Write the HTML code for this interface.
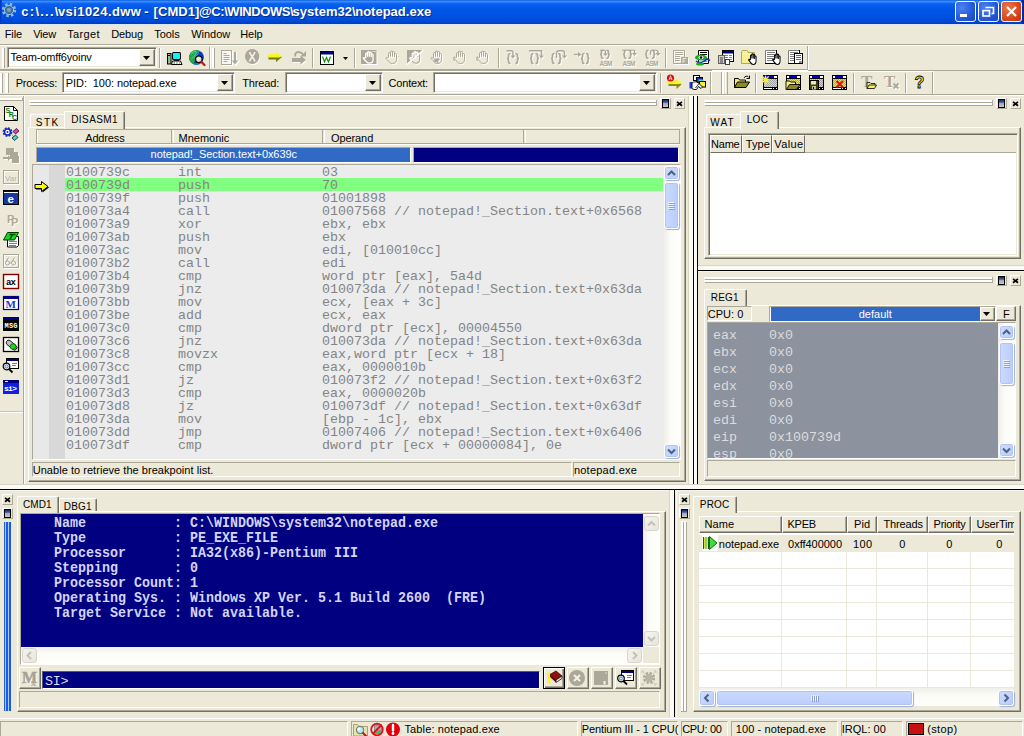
<!DOCTYPE html>
<html><head><meta charset="utf-8"><title>SoftICE</title>
<style>
html,body{margin:0;padding:0}
body{width:1024px;height:736px;position:relative;overflow:hidden;background:#ECE9D8;font:11px "Liberation Sans",sans-serif;color:#000}
div{position:absolute;white-space:pre}
svg{position:absolute;overflow:visible}
.t{font:11px/13px "Liberation Sans",sans-serif;color:#000}
.m{font:13.33px/13px "Liberation Mono",monospace;color:#848484}
.c{font:bold 13.33px/15px "Liberation Mono",monospace;color:#D4D4F8;transform:scaleY(1.1);transform-origin:0 0}
.tab{font:10px/12px "Liberation Sans",sans-serif;letter-spacing:0.45px;color:#000}
.title{font:bold 13px/16px "Liberation Sans",sans-serif;color:#fff;text-shadow:1px 1px 0 #0A2A80;letter-spacing:0.17px}
.bigm{font:bold 16px/18px "Liberation Serif",serif;color:#A6A293;text-shadow:1px 1px 0 #fff;-webkit-text-stroke:0.5px #A6A293}
.smx{font:bold 10px/10px "Liberation Serif",serif;color:#ACA899}
.si{font:13.33px/13px "Liberation Mono",monospace;color:#DCDCF4;letter-spacing:-0.3px}

</style></head>
<body>
<div style="left:0px;top:0px;width:1024px;height:24px;background:linear-gradient(to bottom,#0A5FE0 0%,#3C8CF8 6%,#0A60F0 16%,#0055E5 40%,#0050E0 75%,#0046D0 92%,#003CC0 100%)"></div>
<div style="left:1021px;top:0px;width:3px;height:24px;background:linear-gradient(to right,#0040C8,#001E8C)"></div>
<div class="title" style="left:21.3px;top:4px;letter-spacing:1.26px;">c:\...\</div>
<div class="title" style="left:57.9px;top:4px;letter-spacing:0.43px;">vsi1024.dww</div>
<div class="title" style="left:144.2px;top:4px;letter-spacing:2.34px;">-</div>
<div class="title" style="left:153.5px;top:4px;letter-spacing:0.08px;">[CMD1]</div>
<div class="title" style="left:199.0px;top:4px;letter-spacing:-0.42px;">@C:\WINDOWS\</div>
<div class="title" style="left:292.5px;top:4px;letter-spacing:0.04px;">system32\</div>
<div class="title" style="left:355.2px;top:4px;letter-spacing:0.01px;">notepad.exe</div>
<div style="left:955px;top:1px;width:21px;height:21px;box-sizing:border-box;border:1px solid #fff;border-radius:3px;background:radial-gradient(circle at 30% 30%,#4C82F0,#2458D8 60%,#1C44B8)"></div>
<div style="left:978px;top:1px;width:21px;height:21px;box-sizing:border-box;border:1px solid #fff;border-radius:3px;background:radial-gradient(circle at 30% 30%,#4C82F0,#2458D8 60%,#1C44B8)"></div>
<div style="left:1001px;top:1px;width:21px;height:21px;box-sizing:border-box;border:1px solid #fff;border-radius:3px;background:radial-gradient(circle at 30% 30%,#E8764C,#D8481E 60%,#B8320C)"></div>
<svg style="left:955px;top:1px" width="67" height="21"><rect x="5" y="13" width="7" height="3" fill="#fff"/><path d="M30.5 6.5h8v6h-2" fill="none" stroke="#fff" stroke-width="1.6"/><rect x="28" y="9.6" width="6.5" height="5.4" fill="none" stroke="#fff" stroke-width="1.6"/><path d="M52 6l9 9M61 6l-9 9" stroke="#fff" stroke-width="2.2" fill="none"/></svg>
<svg style="left:1px;top:2px" width="16" height="16" viewBox="0 0 16 16"><circle cx="8" cy="8" r="5.600" fill="none" stroke="#8FB8DC" stroke-width="3.200" stroke-dasharray="2.300 2.100"/><circle cx="8" cy="8" r="4.600" fill="#2F6FA8" stroke="#9CC4E4" stroke-width="1"/><circle cx="8" cy="8" r="2.300" fill="#7C98B0"/><circle cx="7.600" cy="7.600" r="1" fill="#A89888"/></svg>
<div style="left:0px;top:24px;width:1024px;height:1px;background:#DDE6F6"></div>
<div style="left:0px;top:0px;width:1px;height:24px;background:#0038C8"></div>
<div style="left:1px;top:0px;width:1px;height:24px;background:#0048D8"></div>
<div class="t" style="left:4.7px;top:28px;letter-spacing:-0.08px;">File</div>
<div class="t" style="left:33.2px;top:28px;letter-spacing:-0.22px;">View</div>
<div class="t" style="left:67.2px;top:28px;letter-spacing:0.38px;">Target</div>
<div class="t" style="left:111.2px;top:28px;letter-spacing:-0.11px;">Debug</div>
<div class="t" style="left:154.2px;top:28px;letter-spacing:-0.05px;">Tools</div>
<div class="t" style="left:191.2px;top:28px;letter-spacing:-0.03px;">Window</div>
<div class="t" style="left:240.2px;top:28px;letter-spacing:-0.04px;">Help</div>
<div style="left:0px;top:44px;width:1024px;height:1px;background:#ACA899"></div>
<div style="left:0px;top:45px;width:1024px;height:1px;background:#FFFFFF"></div>
<div style="left:2px;top:48px;width:1px;height:20px;background:#FFFFFF"></div>
<div style="left:3px;top:48px;width:1px;height:20px;background:#FFFFFF"></div>
<div style="left:4px;top:48px;width:1px;height:20px;background:#ACA899"></div>
<div style="left:7px;top:47px;width:150px;height:21px;box-sizing:border-box;border:1px solid;border-color:#ACA899 #FFFFFF #FFFFFF #ACA899;background:#FFFFFF;box-shadow:inset 1px 1px 0 #716F64, inset -1px -1px 0 #ECE9D8;"></div>
<div class="t" style="left:10.4px;top:51px;letter-spacing:-0.15px;">Team-omff6yoinv</div>
<div style="left:139px;top:49px;width:16px;height:17px;box-sizing:border-box;background:#ECE9D8;border:1px solid;border-color:#FFFFFF #716F64 #716F64 #FFFFFF;box-shadow:inset -1px -1px 0 #ACA899"></div>
<svg style="left:143px;top:56px" width="7" height="4"><path d="M0 0h7l-3.5 4z" fill="#000"/></svg>
<div style="left:0px;top:69px;width:808px;height:1px;background:#ACA899"></div>
<div style="left:0px;top:70px;width:808px;height:1px;background:#FFFFFF"></div>
<div style="left:0px;top:71px;width:934px;height:1px;background:#FFFFFF"></div>
<div style="left:808px;top:70px;width:216px;height:1px;background:#ACA899"></div>
<div style="left:0px;top:70px;width:712px;height:1px;background:#ACA899"></div>
<div style="left:807px;top:46px;width:1px;height:23px;background:#ACA899"></div>
<div style="left:808px;top:46px;width:1px;height:24px;background:#FFFFFF"></div>
<div style="left:0px;top:73px;width:1px;height:20px;background:#FFFFFF"></div>
<div style="left:1px;top:73px;width:1px;height:20px;background:#FFFFFF"></div>
<div style="left:2px;top:73px;width:1px;height:20px;background:#ACA899"></div>
<div style="left:5px;top:73px;width:1px;height:20px;background:#FFFFFF"></div>
<div style="left:6px;top:73px;width:1px;height:20px;background:#FFFFFF"></div>
<div style="left:7px;top:73px;width:1px;height:20px;background:#FFFFFF"></div>
<div style="left:8px;top:73px;width:1px;height:20px;background:#ACA899"></div>
<div class="t" style="left:15.7px;top:77px;letter-spacing:-0.16px;">Process:</div>
<div style="left:62px;top:72px;width:173px;height:21px;box-sizing:border-box;border:1px solid;border-color:#ACA899 #FFFFFF #FFFFFF #ACA899;background:#FFFFFF;box-shadow:inset 1px 1px 0 #716F64, inset -1px -1px 0 #ECE9D8;"></div>
<div class="t" style="left:65.8px;top:77px;letter-spacing:-0.08px;">PID:  100: notepad.exe</div>
<div style="left:217px;top:74px;width:16px;height:17px;box-sizing:border-box;background:#ECE9D8;border:1px solid;border-color:#FFFFFF #716F64 #716F64 #FFFFFF;box-shadow:inset -1px -1px 0 #ACA899"></div>
<svg style="left:221px;top:81px" width="7" height="4"><path d="M0 0h7l-3.5 4z" fill="#000"/></svg>
<div class="t" style="left:242.2px;top:77px;letter-spacing:-0.15px;">Thread:</div>
<div style="left:285px;top:72px;width:98px;height:21px;box-sizing:border-box;border:1px solid;border-color:#ACA899 #FFFFFF #FFFFFF #ACA899;background:#FFFFFF;box-shadow:inset 1px 1px 0 #716F64, inset -1px -1px 0 #ECE9D8;"></div>
<div style="left:365px;top:74px;width:16px;height:17px;box-sizing:border-box;background:#ECE9D8;border:1px solid;border-color:#FFFFFF #716F64 #716F64 #FFFFFF;box-shadow:inset -1px -1px 0 #ACA899"></div>
<svg style="left:369px;top:81px" width="7" height="4"><path d="M0 0h7l-3.5 4z" fill="#000"/></svg>
<div class="t" style="left:388.6px;top:77px;letter-spacing:-0.21px;">Context:</div>
<div style="left:433px;top:72px;width:224px;height:21px;box-sizing:border-box;border:1px solid;border-color:#ACA899 #FFFFFF #FFFFFF #ACA899;background:#FFFFFF;box-shadow:inset 1px 1px 0 #716F64, inset -1px -1px 0 #ECE9D8;"></div>
<div style="left:639px;top:74px;width:16px;height:17px;box-sizing:border-box;background:#ECE9D8;border:1px solid;border-color:#FFFFFF #716F64 #716F64 #FFFFFF;box-shadow:inset -1px -1px 0 #ACA899"></div>
<svg style="left:643px;top:81px" width="7" height="4"><path d="M0 0h7l-3.5 4z" fill="#000"/></svg>
<div style="left:0px;top:94px;width:1024px;height:1px;background:#ACA899"></div>
<div style="left:0px;top:95px;width:1024px;height:1px;background:#FFFFFF"></div>
<div style="left:23px;top:96px;width:1px;height:388px;background:#ACA899"></div>
<div style="left:24px;top:96px;width:1px;height:388px;background:#FFFFFF"></div>
<div style="left:0px;top:411px;width:23px;height:1px;background:#C9C6B6"></div>
<div style="left:0px;top:412px;width:23px;height:1px;background:#FFFFFF"></div>
<div style="left:0px;top:98px;width:22px;height:1px;background:#FFFFFF"></div>
<div style="left:0px;top:99px;width:22px;height:1px;background:#FFFFFF"></div>
<div style="left:0px;top:100px;width:22px;height:1px;background:#ACA899"></div>
<div style="left:22px;top:98px;width:1px;height:3px;background:#ACA899"></div>
<div style="left:29px;top:100px;width:627px;height:1px;background:#FFFFFF"></div>
<div style="left:29px;top:101px;width:627px;height:1px;background:#FFFFFF"></div>
<div style="left:30px;top:102px;width:627px;height:1px;background:#ACA899"></div>
<div style="left:656px;top:100px;width:1px;height:3px;background:#ACA899"></div>
<div style="left:29px;top:103px;width:627px;height:1px;background:#FFFFFF"></div>
<div style="left:29px;top:104px;width:627px;height:1px;background:#FFFFFF"></div>
<div style="left:30px;top:105px;width:627px;height:1px;background:#ACA899"></div>
<div style="left:656px;top:103px;width:1px;height:3px;background:#ACA899"></div>
<div style="left:660px;top:98px;width:11px;height:11px;box-sizing:border-box;border:1px solid;border-color:#FFFFFF #ACA899 #ACA899 #FFFFFF;"></div>
<div style="left:662px;top:99px;width:7px;height:9px;box-sizing:border-box;border:1px solid #000;background:linear-gradient(to bottom,#0A246A 0,#4A66B0 35%,#A6A6A6 45%,#C8C8C8 100%)"></div>
<div style="left:674px;top:98px;width:11px;height:11px;box-sizing:border-box;border:1px solid;border-color:#FFFFFF #ACA899 #ACA899 #FFFFFF;"></div>
<svg style="left:676px;top:101px" width="7" height="6"><path d="M1 0.9l5 3.8M6 0.9l-5 3.8" stroke="#000" stroke-width="1.7" fill="none"/></svg>
<div style="left:28px;top:127px;width:658px;height:355px;box-sizing:border-box;border:1px solid;border-color:#FFFFFF #716F64 #716F64 #FFFFFF;box-shadow:inset -1px -1px 0 #ACA899"></div>
<div style="left:30px;top:114px;width:34px;height:13px;box-sizing:border-box;border:1px solid;border-color:#FFFFFF #ECE9D8 #ECE9D8 #FFFFFF;border-bottom:none;border-right:none;border-radius:2px 0 0 0;background:#ECE9D8"></div>
<div class="tab" style="left:35.8px;top:117px;letter-spacing:1.47px;">STK</div>
<div style="left:64px;top:111px;width:61px;height:18px;box-sizing:border-box;border:1px solid;border-color:#FFFFFF #716F64 #ECE9D8 #FFFFFF;border-bottom:none;border-radius:2px 2px 0 0;background:#ECE9D8;box-shadow:inset -1px 0 0 #ACA899"></div>
<div class="tab" style="left:71.2px;top:114px;letter-spacing:0.43px;">DISASM1</div>
<div style="left:36px;top:129px;width:644px;height:1px;background:#ACA899"></div>
<div style="left:36px;top:143px;width:644px;height:1px;background:#ACA899"></div>
<div style="left:36px;top:144px;width:644px;height:1px;background:#FFFFFF"></div>
<div style="left:36px;top:129px;width:1px;height:15px;background:#ACA899"></div>
<div style="left:37px;top:130px;width:1px;height:13px;background:#FFFFFF"></div>
<div style="left:171px;top:130px;width:1px;height:13px;background:#ACA899"></div>
<div class="t" style="left:85.2px;top:132px;letter-spacing:-0.14px;">Address</div>
<div style="left:173px;top:130px;width:1px;height:13px;background:#FFFFFF"></div>
<div style="left:322px;top:130px;width:1px;height:13px;background:#ACA899"></div>
<div class="t" style="left:178.6px;top:132px;letter-spacing:-0.01px;">Mnemonic</div>
<div style="left:324px;top:130px;width:1px;height:13px;background:#FFFFFF"></div>
<div style="left:523px;top:130px;width:1px;height:13px;background:#ACA899"></div>
<div class="t" style="left:330.9px;top:132px;letter-spacing:-0.07px;">Operand</div>
<div style="left:525px;top:130px;width:1px;height:13px;background:#FFFFFF"></div>
<div style="left:679px;top:130px;width:1px;height:13px;background:#ACA899"></div>
<div style="left:36px;top:147px;width:375px;height:16px;box-sizing:border-box;border:1px solid;border-color:#ACA899 #FFFFFF #FFFFFF #ACA899;background:#316AC5"></div>
<div class="t" style="left:150.6px;top:148px;color:#fff;letter-spacing:-0.07px;">notepad!_Section.text+0x639c</div>
<div style="left:413px;top:147px;width:266px;height:16px;box-sizing:border-box;border:1px solid;border-color:#ACA899 #FFFFFF #FFFFFF #ACA899;background:#000080"></div>
<div style="left:32px;top:164px;width:649px;height:296px;box-sizing:border-box;border:1px solid;border-color:#ACA899 #FFFFFF #FFFFFF #ACA899;background:#ECECEC"></div>
<div style="left:33px;top:165px;width:16px;height:294px;background:#E8E8E8"></div>
<div style="left:49px;top:165px;width:16px;height:294px;background:#D8D8D8"></div>
<div style="left:65px;top:178px;width:598px;height:13px;background:#80FF80"></div>
<div class="m" style="left:66px;top:166px;">0100739c</div>
<div class="m" style="left:178px;top:166px;">int</div>
<div class="m" style="left:322px;top:166px;">03</div>
<div class="m" style="left:66px;top:179px;">0100739d</div>
<div class="m" style="left:178px;top:179px;">push</div>
<div class="m" style="left:322px;top:179px;">70</div>
<div class="m" style="left:66px;top:192px;">0100739f</div>
<div class="m" style="left:178px;top:192px;">push</div>
<div class="m" style="left:322px;top:192px;">01001898</div>
<div class="m" style="left:66px;top:205px;">010073a4</div>
<div class="m" style="left:178px;top:205px;">call</div>
<div class="m" style="left:322px;top:205px;">01007568 // notepad!_Section.text+0x6568</div>
<div class="m" style="left:66px;top:218px;">010073a9</div>
<div class="m" style="left:178px;top:218px;">xor</div>
<div class="m" style="left:322px;top:218px;">ebx, ebx</div>
<div class="m" style="left:66px;top:231px;">010073ab</div>
<div class="m" style="left:178px;top:231px;">push</div>
<div class="m" style="left:322px;top:231px;">ebx</div>
<div class="m" style="left:66px;top:244px;">010073ac</div>
<div class="m" style="left:178px;top:244px;">mov</div>
<div class="m" style="left:322px;top:244px;">edi, [010010cc]</div>
<div class="m" style="left:66px;top:257px;">010073b2</div>
<div class="m" style="left:178px;top:257px;">call</div>
<div class="m" style="left:322px;top:257px;">edi</div>
<div class="m" style="left:66px;top:270px;">010073b4</div>
<div class="m" style="left:178px;top:270px;">cmp</div>
<div class="m" style="left:322px;top:270px;">word ptr [eax], 5a4d</div>
<div class="m" style="left:66px;top:283px;">010073b9</div>
<div class="m" style="left:178px;top:283px;">jnz</div>
<div class="m" style="left:322px;top:283px;">010073da // notepad!_Section.text+0x63da</div>
<div class="m" style="left:66px;top:296px;">010073bb</div>
<div class="m" style="left:178px;top:296px;">mov</div>
<div class="m" style="left:322px;top:296px;">ecx, [eax + 3c]</div>
<div class="m" style="left:66px;top:309px;">010073be</div>
<div class="m" style="left:178px;top:309px;">add</div>
<div class="m" style="left:322px;top:309px;">ecx, eax</div>
<div class="m" style="left:66px;top:322px;">010073c0</div>
<div class="m" style="left:178px;top:322px;">cmp</div>
<div class="m" style="left:322px;top:322px;">dword ptr [ecx], 00004550</div>
<div class="m" style="left:66px;top:335px;">010073c6</div>
<div class="m" style="left:178px;top:335px;">jnz</div>
<div class="m" style="left:322px;top:335px;">010073da // notepad!_Section.text+0x63da</div>
<div class="m" style="left:66px;top:348px;">010073c8</div>
<div class="m" style="left:178px;top:348px;">movzx</div>
<div class="m" style="left:322px;top:348px;">eax,word ptr [ecx + 18]</div>
<div class="m" style="left:66px;top:361px;">010073cc</div>
<div class="m" style="left:178px;top:361px;">cmp</div>
<div class="m" style="left:322px;top:361px;">eax, 0000010b</div>
<div class="m" style="left:66px;top:374px;">010073d1</div>
<div class="m" style="left:178px;top:374px;">jz</div>
<div class="m" style="left:322px;top:374px;">010073f2 // notepad!_Section.text+0x63f2</div>
<div class="m" style="left:66px;top:387px;">010073d3</div>
<div class="m" style="left:178px;top:387px;">cmp</div>
<div class="m" style="left:322px;top:387px;">eax, 0000020b</div>
<div class="m" style="left:66px;top:400px;">010073d8</div>
<div class="m" style="left:178px;top:400px;">jz</div>
<div class="m" style="left:322px;top:400px;">010073df // notepad!_Section.text+0x63df</div>
<div class="m" style="left:66px;top:413px;">010073da</div>
<div class="m" style="left:178px;top:413px;">mov</div>
<div class="m" style="left:322px;top:413px;">[ebp - 1c], ebx</div>
<div class="m" style="left:66px;top:426px;">010073dd</div>
<div class="m" style="left:178px;top:426px;">jmp</div>
<div class="m" style="left:322px;top:426px;">01007406 // notepad!_Section.text+0x6406</div>
<div class="m" style="left:66px;top:439px;">010073df</div>
<div class="m" style="left:178px;top:439px;">cmp</div>
<div class="m" style="left:322px;top:439px;">dword ptr [ecx + 00000084], 0e</div>
<svg style="left:34px;top:180px" width="16" height="14" viewBox="0 0 16 14"><path d="M2 5.500h6.500v-3l6.500 5l-6.500 5v-3h-6.500z" fill="#000"/><path d="M1 4.500h6.500v-3l6.500 5l-6.500 5v-3h-6.500z" fill="#FFFF00" stroke="#000" stroke-width="1"/></svg>
<div style="left:32px;top:462px;width:540px;height:15px;box-sizing:border-box;border:1px solid;border-color:#ACA899 #FFFFFF #FFFFFF #ACA899;"></div>
<div class="t" style="left:32.7px;top:464px;letter-spacing:0.04px;">Unable to retrieve the breakpoint list.</div>
<div style="left:573px;top:462px;width:107px;height:15px;box-sizing:border-box;border:1px solid;border-color:#ACA899 #FFFFFF #FFFFFF #ACA899;"></div>
<div class="t" style="left:573.9px;top:464px;letter-spacing:0.24px;">notepad.exe</div>
<div style="left:688px;top:96px;width:1px;height:388px;background:#D8D5C4"></div>
<div style="left:689px;top:96px;width:4px;height:389px;background:#FBFAF5"></div>
<div style="left:693px;top:96px;width:1px;height:389px;background:#000"></div>
<div style="left:694px;top:96px;width:3px;height:389px;background:#FBFAF5"></div>
<div style="left:697px;top:96px;width:1px;height:389px;background:#000"></div>
<div style="left:698px;top:265px;width:326px;height:1px;background:#D8D5C4"></div>
<div style="left:698px;top:266px;width:326px;height:4px;background:#FBFAF5"></div>
<div style="left:697px;top:270px;width:327px;height:1px;background:#000"></div>
<div style="left:698px;top:271px;width:326px;height:1px;background:#F6F5EE"></div>
<div style="left:0px;top:484px;width:1024px;height:1px;background:#D8D5C4"></div>
<div style="left:0px;top:485px;width:1024px;height:4px;background:#FBFAF5"></div>
<div style="left:0px;top:489px;width:1024px;height:1px;background:#000"></div>
<div style="left:0px;top:490px;width:1024px;height:1px;background:#F6F5EE"></div>
<div style="left:669px;top:490px;width:1px;height:227px;background:#D8D5C4"></div>
<div style="left:670px;top:490px;width:4px;height:227px;background:#FBFAF5"></div>
<div style="left:674px;top:490px;width:1px;height:227px;background:#000"></div>
<div style="left:676px;top:491px;width:1px;height:226px;background:#F8F7F2"></div>
<div style="left:704px;top:100px;width:288px;height:1px;background:#FFFFFF"></div>
<div style="left:704px;top:101px;width:288px;height:1px;background:#FFFFFF"></div>
<div style="left:705px;top:102px;width:288px;height:1px;background:#ACA899"></div>
<div style="left:992px;top:100px;width:1px;height:3px;background:#ACA899"></div>
<div style="left:704px;top:103px;width:288px;height:1px;background:#FFFFFF"></div>
<div style="left:704px;top:104px;width:288px;height:1px;background:#FFFFFF"></div>
<div style="left:705px;top:105px;width:288px;height:1px;background:#ACA899"></div>
<div style="left:992px;top:103px;width:1px;height:3px;background:#ACA899"></div>
<div style="left:996px;top:98px;width:11px;height:11px;box-sizing:border-box;border:1px solid;border-color:#FFFFFF #ACA899 #ACA899 #FFFFFF;"></div>
<div style="left:998px;top:99px;width:7px;height:9px;box-sizing:border-box;border:1px solid #000;background:linear-gradient(to bottom,#0A246A 0,#4A66B0 35%,#A6A6A6 45%,#C8C8C8 100%)"></div>
<div style="left:1010px;top:98px;width:11px;height:11px;box-sizing:border-box;border:1px solid;border-color:#FFFFFF #ACA899 #ACA899 #FFFFFF;"></div>
<svg style="left:1012px;top:101px" width="7" height="6"><path d="M1 0.9l5 3.8M6 0.9l-5 3.8" stroke="#000" stroke-width="1.7" fill="none"/></svg>
<div style="left:704px;top:127px;width:317px;height:132px;box-sizing:border-box;border:1px solid;border-color:#FFFFFF #716F64 #716F64 #FFFFFF;box-shadow:inset -1px -1px 0 #ACA899"></div>
<div style="left:706px;top:114px;width:34px;height:13px;box-sizing:border-box;border:1px solid;border-color:#FFFFFF #ECE9D8 #ECE9D8 #FFFFFF;border-bottom:none;border-right:none;border-radius:2px 0 0 0;background:#ECE9D8"></div>
<div class="tab" style="left:710.2px;top:117px;letter-spacing:1.19px;">WAT</div>
<div style="left:740px;top:111px;width:39px;height:18px;box-sizing:border-box;border:1px solid;border-color:#FFFFFF #716F64 #ECE9D8 #FFFFFF;border-bottom:none;border-radius:2px 2px 0 0;background:#ECE9D8;box-shadow:inset -1px 0 0 #ACA899"></div>
<div class="tab" style="left:746.8px;top:114px;letter-spacing:0.26px;">LOC</div>
<div style="left:708px;top:133px;width:310px;height:123px;box-sizing:border-box;border:1px solid;border-color:#ACA899 #FFFFFF #FFFFFF #ACA899;background:#FFFFFF;box-shadow:inset 1px 1px 0 #716F64, inset -1px -1px 0 #ECE9D8;"></div>
<div style="left:710px;top:135px;width:306px;height:18px;background:#ECE9D8"></div>
<div style="left:710px;top:152px;width:306px;height:1px;background:#ACA899"></div>
<div style="left:710px;top:135px;width:32px;height:18px;box-sizing:border-box;border:1px solid;border-color:#FFFFFF #ACA899 #ACA899 #FFFFFF;border-color:#FFFFFF #716F64 #716F64 #FFFFFF"></div>
<div class="t" style="left:711.1px;top:138px;letter-spacing:-0.25px;">Name</div>
<div style="left:742px;top:135px;width:30px;height:18px;box-sizing:border-box;border:1px solid;border-color:#FFFFFF #ACA899 #ACA899 #FFFFFF;border-color:#FFFFFF #716F64 #716F64 #FFFFFF"></div>
<div class="t" style="left:745.8px;top:138px;letter-spacing:0.08px;">Type</div>
<div style="left:772px;top:135px;width:33px;height:18px;box-sizing:border-box;border:1px solid;border-color:#FFFFFF #ACA899 #ACA899 #FFFFFF;border-color:#FFFFFF #716F64 #716F64 #FFFFFF"></div>
<div class="t" style="left:774.2px;top:138px;letter-spacing:0.42px;">Value</div>
<div style="left:704px;top:277px;width:288px;height:1px;background:#FFFFFF"></div>
<div style="left:704px;top:278px;width:288px;height:1px;background:#FFFFFF"></div>
<div style="left:705px;top:279px;width:288px;height:1px;background:#ACA899"></div>
<div style="left:992px;top:277px;width:1px;height:3px;background:#ACA899"></div>
<div style="left:704px;top:280px;width:288px;height:1px;background:#FFFFFF"></div>
<div style="left:704px;top:281px;width:288px;height:1px;background:#FFFFFF"></div>
<div style="left:705px;top:282px;width:288px;height:1px;background:#ACA899"></div>
<div style="left:992px;top:280px;width:1px;height:3px;background:#ACA899"></div>
<div style="left:996px;top:275px;width:11px;height:11px;box-sizing:border-box;border:1px solid;border-color:#FFFFFF #ACA899 #ACA899 #FFFFFF;"></div>
<div style="left:998px;top:276px;width:7px;height:9px;box-sizing:border-box;border:1px solid #000;background:linear-gradient(to bottom,#0A246A 0,#4A66B0 35%,#A6A6A6 45%,#C8C8C8 100%)"></div>
<div style="left:1010px;top:275px;width:11px;height:11px;box-sizing:border-box;border:1px solid;border-color:#FFFFFF #ACA899 #ACA899 #FFFFFF;"></div>
<svg style="left:1012px;top:278px" width="7" height="6"><path d="M1 0.9l5 3.8M6 0.9l-5 3.8" stroke="#000" stroke-width="1.7" fill="none"/></svg>
<div style="left:704px;top:305px;width:317px;height:176px;box-sizing:border-box;border:1px solid;border-color:#FFFFFF #716F64 #716F64 #FFFFFF;box-shadow:inset -1px -1px 0 #ACA899"></div>
<div style="left:704px;top:289px;width:43px;height:18px;box-sizing:border-box;border:1px solid;border-color:#FFFFFF #716F64 #ECE9D8 #FFFFFF;border-bottom:none;border-radius:2px 2px 0 0;background:#ECE9D8;box-shadow:inset -1px 0 0 #ACA899"></div>
<div class="tab" style="left:710.7px;top:292px;letter-spacing:0.25px;">REG1</div>
<div style="left:707px;top:306px;width:45px;height:15px;box-sizing:border-box;border:1px solid;border-color:#ACA899 #FFFFFF #FFFFFF #ACA899;"></div>
<div class="t" style="left:707.8px;top:308px;letter-spacing:0.01px;">CPU: 0</div>
<div style="left:769px;top:306px;width:227px;height:16px;box-sizing:border-box;border:1px solid;border-color:#ACA899 #FFFFFF #FFFFFF #ACA899;background:#fff"></div>
<div style="left:771px;top:307px;width:209px;height:14px;background:#316AC5"></div>
<div class="t" style="left:858.7px;top:308px;color:#fff;letter-spacing:0.03px;">default</div>
<div style="left:980px;top:307px;width:15px;height:14px;box-sizing:border-box;background:#ECE9D8;border:1px solid;border-color:#FFFFFF #716F64 #716F64 #FFFFFF;box-shadow:inset -1px -1px 0 #ACA899"></div>
<svg style="left:983px;top:312px" width="7" height="4"><path d="M0 0h7l-3.5 4z" fill="#000"/></svg>
<div style="left:996px;top:306px;width:20px;height:15px;box-sizing:border-box;background:#ECE9D8;border:1px solid;border-color:#FFFFFF #716F64 #716F64 #FFFFFF;box-shadow:inset -1px -1px 0 #ACA899"></div>
<div class="t" style="left:1003px;top:308px;">F</div>
<div style="left:707px;top:322px;width:309px;height:137px;box-sizing:border-box;border:1px solid;border-color:#ACA899 #FFFFFF #FFFFFF #ACA899;background:#fff"></div>
<div style="left:708px;top:323px;width:290px;height:135px;background:#8C929E"></div>
<div style="left:708px;top:323px;width:290px;height:135px;overflow:hidden"><div style="left:0;top:0"><div class="m" style="left:5px;top:6px;color:#DCDCDC">eax</div><div class="m" style="left:61px;top:6px;color:#DCDCDC">0x0</div><div class="m" style="left:5px;top:23px;color:#DCDCDC">ebx</div><div class="m" style="left:61px;top:23px;color:#DCDCDC">0x0</div><div class="m" style="left:5px;top:40px;color:#DCDCDC">ecx</div><div class="m" style="left:61px;top:40px;color:#DCDCDC">0x0</div><div class="m" style="left:5px;top:57px;color:#DCDCDC">edx</div><div class="m" style="left:61px;top:57px;color:#DCDCDC">0x0</div><div class="m" style="left:5px;top:74px;color:#DCDCDC">esi</div><div class="m" style="left:61px;top:74px;color:#DCDCDC">0x0</div><div class="m" style="left:5px;top:91px;color:#DCDCDC">edi</div><div class="m" style="left:61px;top:91px;color:#DCDCDC">0x0</div><div class="m" style="left:5px;top:108px;color:#DCDCDC">eip</div><div class="m" style="left:61px;top:108px;color:#DCDCDC">0x100739d</div><div class="m" style="left:5px;top:125px;color:#DCDCDC">esp</div><div class="m" style="left:61px;top:125px;color:#DCDCDC">0x0</div></div></div>
<div style="left:707px;top:460px;width:309px;height:17px;box-sizing:border-box;border:1px solid;border-color:#ACA899 #FFFFFF #FFFFFF #ACA899;"></div>
<div style="left:664px;top:165px;width:16px;height:294px;background:linear-gradient(to right,#F0EFE9,#FBFBF8 40%,#FEFEFB)"></div>
<div style="left:664px;top:166px;width:15px;height:14px;box-sizing:border-box;border:1px solid #FFFFFF;border-radius:3px;background:linear-gradient(135deg,#D0DDFE,#B8CCFB);box-shadow:0 0 0 1px #B4C4EE inset, 1px 1px 1px #9EB0D8"></div>
<svg style="left:0;top:0" width="1024" height="736"><path d="M668.0 175.0L671.5 171.5L675.0 175.0" fill="none" stroke="#4D6185" stroke-width="2"/></svg>
<div style="left:664px;top:444px;width:15px;height:14px;box-sizing:border-box;border:1px solid #FFFFFF;border-radius:3px;background:linear-gradient(135deg,#D0DDFE,#B8CCFB);box-shadow:0 0 0 1px #B4C4EE inset, 1px 1px 1px #9EB0D8"></div>
<svg style="left:0;top:0" width="1024" height="736"><path d="M668.0 449.5L671.5 453.0L675.0 449.5" fill="none" stroke="#4D6185" stroke-width="2"/></svg>
<div style="left:664px;top:182px;width:15px;height:47px;box-sizing:border-box;border:1px solid #fff;border-radius:3px;background:linear-gradient(to right,#CADAFE,#BACDFB);box-shadow:0 0 0 1px #B4C4EE inset, 1px 1px 1px #9EB0D8"></div>
<div style="left:668px;top:202px;width:6px;height:1px;background:#EEF4FE"></div>
<div style="left:669px;top:203px;width:6px;height:1px;background:#8CA0D8"></div>
<div style="left:668px;top:204px;width:6px;height:1px;background:#EEF4FE"></div>
<div style="left:669px;top:205px;width:6px;height:1px;background:#8CA0D8"></div>
<div style="left:668px;top:206px;width:6px;height:1px;background:#EEF4FE"></div>
<div style="left:669px;top:207px;width:6px;height:1px;background:#8CA0D8"></div>
<div style="left:668px;top:208px;width:6px;height:1px;background:#EEF4FE"></div>
<div style="left:669px;top:209px;width:6px;height:1px;background:#8CA0D8"></div>
<div style="left:998px;top:323px;width:17px;height:135px;background:linear-gradient(to right,#F0EFE9,#FBFBF8 40%,#FEFEFB)"></div>
<div style="left:999px;top:325px;width:15px;height:14px;box-sizing:border-box;border:1px solid #FFFFFF;border-radius:3px;background:linear-gradient(135deg,#D0DDFE,#B8CCFB);box-shadow:0 0 0 1px #B4C4EE inset, 1px 1px 1px #9EB0D8"></div>
<svg style="left:0;top:0" width="1024" height="736"><path d="M1003.0 334.0L1006.5 330.5L1010.0 334.0" fill="none" stroke="#4D6185" stroke-width="2"/></svg>
<div style="left:999px;top:443px;width:15px;height:14px;box-sizing:border-box;border:1px solid #FFFFFF;border-radius:3px;background:linear-gradient(135deg,#D0DDFE,#B8CCFB);box-shadow:0 0 0 1px #B4C4EE inset, 1px 1px 1px #9EB0D8"></div>
<svg style="left:0;top:0" width="1024" height="736"><path d="M1003.0 448.5L1006.5 452.0L1010.0 448.5" fill="none" stroke="#4D6185" stroke-width="2"/></svg>
<div style="left:999px;top:342px;width:15px;height:43px;box-sizing:border-box;border:1px solid #fff;border-radius:3px;background:linear-gradient(to right,#CADAFE,#BACDFB);box-shadow:0 0 0 1px #B4C4EE inset, 1px 1px 1px #9EB0D8"></div>
<div style="left:1003px;top:360px;width:6px;height:1px;background:#EEF4FE"></div>
<div style="left:1004px;top:361px;width:6px;height:1px;background:#8CA0D8"></div>
<div style="left:1003px;top:362px;width:6px;height:1px;background:#EEF4FE"></div>
<div style="left:1004px;top:363px;width:6px;height:1px;background:#8CA0D8"></div>
<div style="left:1003px;top:364px;width:6px;height:1px;background:#EEF4FE"></div>
<div style="left:1004px;top:365px;width:6px;height:1px;background:#8CA0D8"></div>
<div style="left:1003px;top:366px;width:6px;height:1px;background:#EEF4FE"></div>
<div style="left:1004px;top:367px;width:6px;height:1px;background:#8CA0D8"></div>
<div style="left:2px;top:494px;width:11px;height:11px;box-sizing:border-box;border:1px solid;border-color:#FFFFFF #ACA899 #ACA899 #FFFFFF;"></div>
<svg style="left:4px;top:497px" width="7" height="6"><path d="M1 0.9l5 3.8M6 0.9l-5 3.8" stroke="#000" stroke-width="1.7" fill="none"/></svg>
<div style="left:2px;top:508px;width:11px;height:11px;box-sizing:border-box;border:1px solid;border-color:#FFFFFF #ACA899 #ACA899 #FFFFFF;"></div>
<div style="left:4px;top:509px;width:7px;height:9px;box-sizing:border-box;border:1px solid #000;background:linear-gradient(to bottom,#0A246A 0,#4A66B0 35%,#A6A6A6 45%,#C8C8C8 100%)"></div>
<div style="left:4px;top:522px;width:7px;height:189px;background:#1C5CD8"></div>
<div style="left:5px;top:522px;width:1px;height:189px;background:#A8CCFF"></div>
<div style="left:8px;top:522px;width:1px;height:189px;background:#A8CCFF"></div>
<div style="left:17px;top:511px;width:649px;height:201px;box-sizing:border-box;border:1px solid;border-color:#FFFFFF #716F64 #716F64 #FFFFFF;box-shadow:inset -1px -1px 0 #ACA899"></div>
<div style="left:17px;top:496px;width:42px;height:17px;box-sizing:border-box;border:1px solid;border-color:#FFFFFF #716F64 #ECE9D8 #FFFFFF;border-bottom:none;border-radius:2px 2px 0 0;background:#ECE9D8;box-shadow:inset -1px 0 0 #ACA899"></div>
<div class="tab" style="left:22.9px;top:499px;letter-spacing:0.15px;">CMD1</div>
<div style="left:59px;top:498px;width:38px;height:13px;box-sizing:border-box;border:1px solid;border-color:#FFFFFF #716F64 #ECE9D8 #FFFFFF;border-bottom:none;border-radius:2px 2px 0 0;background:#ECE9D8;box-shadow:inset -1px 0 0 #ACA899"></div>
<div class="tab" style="left:63.7px;top:501px;letter-spacing:0.25px;">DBG1</div>
<div style="left:20px;top:513px;width:640px;height:152px;box-sizing:border-box;border:1px solid;border-color:#ACA899 #FFFFFF #FFFFFF #ACA899;background:#fff"></div>
<div style="left:21px;top:514px;width:622px;height:133px;background:#000080"></div>
<div class="c" style="left:22px;top:514.5px;">    Name           : C:\WINDOWS\system32\notepad.exe</div>
<div class="c" style="left:22px;top:529.5px;">    Type           : PE_EXE_FILE</div>
<div class="c" style="left:22px;top:544.5px;">    Processor      : IA32(x86)-Pentium III</div>
<div class="c" style="left:22px;top:559.5px;">    Stepping       : 0</div>
<div class="c" style="left:22px;top:574.5px;">    Processor Count: 1</div>
<div class="c" style="left:22px;top:589.5px;">    Operating Sys. : Windows XP Ver. 5.1 Build 2600  (FRE)</div>
<div class="c" style="left:22px;top:604.5px;">    Target Service : Not available.</div>
<div style="left:643px;top:514px;width:16px;height:133px;background:linear-gradient(to right,#F0EFE9,#FBFBF8 40%,#FEFEFB)"></div>
<div style="left:644px;top:516px;width:15px;height:15px;box-sizing:border-box;border:1px solid #D8D6CA;border-radius:3px;background:linear-gradient(135deg,#F4F3EE,#E8E6DC)"></div>
<svg style="left:0;top:0" width="1024" height="736"><path d="M648.0 525.5L651.5 522.0L655.0 525.5" fill="none" stroke="#C4C2B6" stroke-width="2"/></svg>
<div style="left:644px;top:631px;width:15px;height:15px;box-sizing:border-box;border:1px solid #D8D6CA;border-radius:3px;background:linear-gradient(135deg,#F4F3EE,#E8E6DC)"></div>
<svg style="left:0;top:0" width="1024" height="736"><path d="M648.0 637.0L651.5 640.5L655.0 637.0" fill="none" stroke="#C4C2B6" stroke-width="2"/></svg>
<div style="left:21px;top:647px;width:622px;height:16px;background:linear-gradient(to bottom,#F0EFE9,#FBFBF8 40%,#FEFEFB)"></div>
<div style="left:22px;top:648px;width:15px;height:15px;box-sizing:border-box;border:1px solid #D8D6CA;border-radius:3px;background:linear-gradient(135deg,#F4F3EE,#E8E6DC)"></div>
<svg style="left:0;top:0" width="1024" height="736"><path d="M31.0 652.0L27.5 655.5L31.0 659.0" fill="none" stroke="#C4C2B6" stroke-width="2"/></svg>
<div style="left:627px;top:648px;width:15px;height:15px;box-sizing:border-box;border:1px solid #D8D6CA;border-radius:3px;background:linear-gradient(135deg,#F4F3EE,#E8E6DC)"></div>
<svg style="left:0;top:0" width="1024" height="736"><path d="M633.0 652.0L636.5 655.5L633.0 659.0" fill="none" stroke="#C4C2B6" stroke-width="2"/></svg>
<div style="left:643px;top:647px;width:16px;height:16px;background:#ECE9D8"></div>
<div style="left:19px;top:667px;width:22px;height:22px;box-sizing:border-box;border:1px solid;border-color:#FFFFFF #716F64 #716F64 #FFFFFF;box-shadow:inset -1px -1px 0 #ACA899"></div>
<div class="bigm" style="left:22px;top:669px;">M</div>
<div class="smx" style="left:31px;top:678px;">x</div>
<div style="left:42px;top:671px;width:498px;height:18px;box-sizing:border-box;border:1px solid;border-color:#55557A #FFFFFF #FFFFFF #55557A;background:#000080"></div>
<div class="si" style="left:45px;top:675px;">SI&gt;</div>
<div style="left:543px;top:667px;width:22px;height:22px;box-sizing:border-box;border:1px solid #000;box-shadow:inset 1px 1px 0 #FFFFFF, inset -1px -1px 0 #716F64, inset -2px -2px 0 #ACA899"></div>
<div style="left:567px;top:667px;width:22px;height:22px;box-sizing:border-box;border:1px solid;border-color:#FFFFFF #716F64 #716F64 #FFFFFF;box-shadow:inset -1px -1px 0 #ACA899"></div>
<div style="left:591px;top:667px;width:22px;height:22px;box-sizing:border-box;border:1px solid;border-color:#FFFFFF #716F64 #716F64 #FFFFFF;box-shadow:inset -1px -1px 0 #ACA899"></div>
<div style="left:615px;top:667px;width:22px;height:22px;box-sizing:border-box;border:1px solid;border-color:#FFFFFF #716F64 #716F64 #FFFFFF;box-shadow:inset -1px -1px 0 #ACA899"></div>
<div style="left:639px;top:667px;width:22px;height:22px;box-sizing:border-box;border:1px solid;border-color:#FFFFFF #716F64 #716F64 #FFFFFF;box-shadow:inset -1px -1px 0 #ACA899"></div>
<div style="left:19px;top:691px;width:641px;height:17px;box-sizing:border-box;border:1px solid;border-color:#ACA899 #FFFFFF #FFFFFF #ACA899;"></div>
<div style="left:679px;top:494px;width:11px;height:11px;box-sizing:border-box;border:1px solid;border-color:#FFFFFF #ACA899 #ACA899 #FFFFFF;"></div>
<svg style="left:681px;top:497px" width="7" height="6"><path d="M1 0.9l5 3.8M6 0.9l-5 3.8" stroke="#000" stroke-width="1.7" fill="none"/></svg>
<div style="left:679px;top:508px;width:11px;height:11px;box-sizing:border-box;border:1px solid;border-color:#FFFFFF #ACA899 #ACA899 #FFFFFF;"></div>
<div style="left:681px;top:509px;width:7px;height:9px;box-sizing:border-box;border:1px solid #000;background:linear-gradient(to bottom,#0A246A 0,#4A66B0 35%,#A6A6A6 45%,#C8C8C8 100%)"></div>
<div style="left:681px;top:521px;width:1px;height:190px;background:#FFFFFF"></div>
<div style="left:682px;top:521px;width:1px;height:190px;background:#FFFFFF"></div>
<div style="left:683px;top:522px;width:1px;height:190px;background:#ACA899"></div>
<div style="left:681px;top:711px;width:3px;height:1px;background:#ACA899"></div>
<div style="left:684px;top:521px;width:1px;height:190px;background:#FFFFFF"></div>
<div style="left:685px;top:521px;width:1px;height:190px;background:#FFFFFF"></div>
<div style="left:686px;top:522px;width:1px;height:190px;background:#ACA899"></div>
<div style="left:684px;top:711px;width:3px;height:1px;background:#ACA899"></div>
<div style="left:693px;top:511px;width:328px;height:201px;box-sizing:border-box;border:1px solid;border-color:#FFFFFF #716F64 #716F64 #FFFFFF;box-shadow:inset -1px -1px 0 #ACA899"></div>
<div style="left:693px;top:496px;width:44px;height:17px;box-sizing:border-box;border:1px solid;border-color:#FFFFFF #716F64 #ECE9D8 #FFFFFF;border-bottom:none;border-radius:2px 2px 0 0;background:#ECE9D8;box-shadow:inset -1px 0 0 #ACA899"></div>
<div class="tab" style="left:699.8px;top:499px;letter-spacing:0.20px;">PROC</div>
<div style="left:699px;top:516px;width:315px;height:173px;background:#fff;overflow:hidden"></div>
<div style="left:699px;top:535px;width:315px;height:16px;background:#ECE9D8"></div>
<div style="left:699px;top:516px;width:83px;height:17px;box-sizing:border-box;background:#ECE9D8;border:1px solid;border-color:#FFFFFF #716F64 #716F64 #FFFFFF;box-shadow:inset -1px -1px 0 #ACA899"></div>
<div class="t" style="left:704.5px;top:518px;letter-spacing:0.09px;">Name</div>
<div style="left:782px;top:516px;width:65px;height:17px;box-sizing:border-box;background:#ECE9D8;border:1px solid;border-color:#FFFFFF #716F64 #716F64 #FFFFFF;box-shadow:inset -1px -1px 0 #ACA899"></div>
<div class="t" style="left:787.5px;top:518px;letter-spacing:-0.22px;">KPEB</div>
<div style="left:847px;top:516px;width:30px;height:17px;box-sizing:border-box;background:#ECE9D8;border:1px solid;border-color:#FFFFFF #716F64 #716F64 #FFFFFF;box-shadow:inset -1px -1px 0 #ACA899"></div>
<div class="t" style="left:854.1px;top:518px;letter-spacing:0.10px;">Pid</div>
<div style="left:877px;top:516px;width:51px;height:17px;box-sizing:border-box;background:#ECE9D8;border:1px solid;border-color:#FFFFFF #716F64 #716F64 #FFFFFF;box-shadow:inset -1px -1px 0 #ACA899"></div>
<div class="t" style="left:883.4px;top:518px;letter-spacing:-0.14px;">Threads</div>
<div style="left:928px;top:516px;width:43px;height:17px;box-sizing:border-box;background:#ECE9D8;border:1px solid;border-color:#FFFFFF #716F64 #716F64 #FFFFFF;box-shadow:inset -1px -1px 0 #ACA899"></div>
<div class="t" style="left:933.6px;top:518px;letter-spacing:-0.28px;">Priority</div>
<div style="left:971px;top:516px;width:43px;height:17px;box-sizing:border-box;background:#ECE9D8;border:1px solid;border-color:#FFFFFF #716F64 #716F64 #FFFFFF;box-shadow:inset -1px -1px 0 #ACA899"></div>
<div style="left:971px;top:516px;width:43px;height:17px;overflow:hidden"><div style="left:0;top:0;width:60px;height:17px;box-sizing:border-box;background:#ECE9D8;border:1px solid;border-color:#FFFFFF #716F64 #716F64 #FFFFFF;box-shadow:inset -1px -1px 0 #ACA899"></div><div class="t" style="left:5.5px;top:2px;letter-spacing:-0.2px">UserTime</div></div>
<div style="left:699px;top:551px;width:315px;height:1px;background:#ECE9D8"></div>
<div style="left:699px;top:568px;width:315px;height:1px;background:#EBE8DA"></div>
<div style="left:699px;top:585px;width:315px;height:1px;background:#EBE8DA"></div>
<div style="left:699px;top:602px;width:315px;height:1px;background:#EBE8DA"></div>
<div style="left:699px;top:619px;width:315px;height:1px;background:#EBE8DA"></div>
<div style="left:699px;top:636px;width:315px;height:1px;background:#EBE8DA"></div>
<div style="left:699px;top:653px;width:315px;height:1px;background:#EBE8DA"></div>
<div style="left:699px;top:670px;width:315px;height:1px;background:#EBE8DA"></div>
<div style="left:699px;top:687px;width:315px;height:1px;background:#EBE8DA"></div>
<div style="left:781px;top:551px;width:1px;height:138px;background:#EBE8DA"></div>
<div style="left:846px;top:551px;width:1px;height:138px;background:#EBE8DA"></div>
<div style="left:876px;top:551px;width:1px;height:138px;background:#EBE8DA"></div>
<div style="left:927px;top:551px;width:1px;height:138px;background:#EBE8DA"></div>
<div style="left:970px;top:551px;width:1px;height:138px;background:#EBE8DA"></div>
<div class="t" style="left:718.8px;top:538px;letter-spacing:-0.03px;">notepad.exe</div>
<div class="t" style="left:788.1px;top:538px;letter-spacing:-0.03px;">0xff400000</div>
<div class="t" style="left:852.9px;top:538px;letter-spacing:0.42px;">100</div>
<div class="t" style="left:899.3px;top:538px;">0</div>
<div class="t" style="left:946.3px;top:538px;">0</div>
<div class="t" style="left:996.3px;top:538px;">0</div>
<svg style="left:702px;top:535px" width="16" height="16" viewBox="0 0 16 16"><rect x="0" y="0" width="16" height="16" fill="#fff"/><path d="M1.500 2v12M4 2v12M6.500 2v12" stroke="#1E5A1E" stroke-width="1"/><path d="M2.700 2.500v11M5.200 2.500v11" stroke="#C8E830" stroke-width="1.200"/><path d="M7.500 1.500l7.500 6.500l-7.500 6.500z" fill="#38E038" stroke="#1A6A1A" stroke-width="1"/></svg>
<div style="left:699px;top:688px;width:315px;height:18px;background:linear-gradient(to bottom,#F0EFE9,#FBFBF8 40%,#FEFEFB)"></div>
<div style="left:699px;top:690px;width:16px;height:16px;box-sizing:border-box;border:1px solid #FFFFFF;border-radius:3px;background:linear-gradient(135deg,#D0DDFE,#B8CCFB);box-shadow:0 0 0 1px #B4C4EE inset, 1px 1px 1px #9EB0D8"></div>
<svg style="left:0;top:0" width="1024" height="736"><path d="M708.5 694.5L705.0 698.0L708.5 701.5" fill="none" stroke="#4D6185" stroke-width="2"/></svg>
<div style="left:998px;top:690px;width:16px;height:16px;box-sizing:border-box;border:1px solid #FFFFFF;border-radius:3px;background:linear-gradient(135deg,#D0DDFE,#B8CCFB);box-shadow:0 0 0 1px #B4C4EE inset, 1px 1px 1px #9EB0D8"></div>
<svg style="left:0;top:0" width="1024" height="736"><path d="M1004.5 694.5L1008.0 698.0L1004.5 701.5" fill="none" stroke="#4D6185" stroke-width="2"/></svg>
<div style="left:716px;top:690px;width:197px;height:16px;box-sizing:border-box;border:1px solid #fff;border-radius:3px;background:linear-gradient(to bottom,#CADAFE,#BACDFB);box-shadow:0 0 0 1px #B4C4EE inset, 1px 1px 1px #9EB0D8"></div>
<div style="left:811px;top:695px;width:1px;height:6px;background:#EEF4FE"></div>
<div style="left:812px;top:696px;width:1px;height:6px;background:#8CA0D8"></div>
<div style="left:813px;top:695px;width:1px;height:6px;background:#EEF4FE"></div>
<div style="left:814px;top:696px;width:1px;height:6px;background:#8CA0D8"></div>
<div style="left:815px;top:695px;width:1px;height:6px;background:#EEF4FE"></div>
<div style="left:816px;top:696px;width:1px;height:6px;background:#8CA0D8"></div>
<div style="left:817px;top:695px;width:1px;height:6px;background:#EEF4FE"></div>
<div style="left:818px;top:696px;width:1px;height:6px;background:#8CA0D8"></div>
<div style="left:0px;top:718px;width:1024px;height:1px;background:#FFFFFF"></div>
<div style="left:0px;top:721px;width:348px;height:15px;box-sizing:border-box;border:1px solid;border-color:#ACA899 #FFFFFF #FFFFFF #ACA899;border-bottom:none"></div>
<div style="left:351px;top:721px;width:227px;height:15px;box-sizing:border-box;border:1px solid;border-color:#ACA899 #FFFFFF #FFFFFF #ACA899;border-bottom:none"></div>
<div style="left:581px;top:721px;width:97px;height:15px;box-sizing:border-box;border:1px solid;border-color:#ACA899 #FFFFFF #FFFFFF #ACA899;border-bottom:none"></div>
<div style="left:681px;top:721px;width:47px;height:15px;box-sizing:border-box;border:1px solid;border-color:#ACA899 #FFFFFF #FFFFFF #ACA899;border-bottom:none"></div>
<div style="left:731px;top:721px;width:107px;height:15px;box-sizing:border-box;border:1px solid;border-color:#ACA899 #FFFFFF #FFFFFF #ACA899;border-bottom:none"></div>
<div style="left:841px;top:721px;width:62px;height:15px;box-sizing:border-box;border:1px solid;border-color:#ACA899 #FFFFFF #FFFFFF #ACA899;border-bottom:none"></div>
<div style="left:906px;top:721px;width:117px;height:15px;box-sizing:border-box;border:1px solid;border-color:#ACA899 #FFFFFF #FFFFFF #ACA899;border-bottom:none"></div>
<div class="t" style="left:404.4px;top:723px;letter-spacing:0.14px;">Table: notepad.exe</div>
<div class="t" style="left:581.8px;top:723px;letter-spacing:-0.10px;">Pentium III - 1 CPU(</div>
<div class="t" style="left:682.2px;top:723px;letter-spacing:-0.31px;">CPU: 00</div>
<div class="t" style="left:735.8px;top:723px;letter-spacing:0.09px;">100 - notepad.exe</div>
<div class="t" style="left:841.7px;top:723px;letter-spacing:0.02px;">IRQL: 00</div>
<div class="t" style="left:927.2px;top:723px;letter-spacing:0.38px;">(stop)</div>
<div style="left:908px;top:723px;width:16px;height:12px;box-sizing:border-box;border:1px solid #000;background:#C81010"></div>
<div style="left:159px;top:48px;width:1px;height:20px;background:#ACA899"></div>
<div style="left:160px;top:48px;width:1px;height:20px;background:#FFFFFF"></div>
<svg style="left:167px;top:51px" width="16" height="14" viewBox="0 0 16 14"><rect x="0.500" y="2.500" width="3.500" height="10.500" fill="#A8B8A0" stroke="#000"/><rect x="1" y="4" width="2" height="1" fill="#000"/><rect x="1" y="7" width="1" height="4" fill="#70C070"/><rect x="5" y="1" width="9" height="8" rx="1.500" fill="#000"/><rect x="6" y="2" width="7" height="6" rx="0.800" fill="#10F0F8"/><rect x="7" y="9" width="5" height="1.200" fill="#000"/><path d="M4.500 13.500l1-3.500h8l1.500 3.500z" fill="#fff" stroke="#000"/><path d="M6.500 12h1.500M9.200 12h1.500M12 12h1" stroke="#000" stroke-width="0.700"/></svg>
<svg style="left:189px;top:50px" width="17" height="17" viewBox="0 0 17 17"><circle cx="7.500" cy="7.500" r="7.300" fill="#1434C0"/><path d="M7.500 0.200a7.300 7.300 0 0 0-3 14c2-3 1-5 2-8c.8-2 3-3.500 4.500-5a7.300 7.300 0 0 0-3.500-1z" fill="#22A844"/><path d="M2 4c1.500-1.500 3-2.500 5-2.800" stroke="#58D070" stroke-width="1.200" fill="none"/><path d="M4 14c2 1 5 1 7-.3l-2-1.700z" fill="#1880A0"/><path d="M2.500 8.500c2-1 4-3.500 5-6.500M6 7.500l3.500-4" stroke="#30E0E8" stroke-width="0.900" fill="none"/><circle cx="9.800" cy="9.300" r="3.300" fill="#D8D8D0" stroke="#000" stroke-width="1.200"/><circle cx="9.400" cy="8.800" r="1.400" fill="#F4F4F0"/><path d="M12.500 12l3 3" stroke="#C81010" stroke-width="2.200" stroke-linecap="round"/></svg>
<div style="left:209px;top:47px;width:1px;height:22px;background:#ACA899"></div>
<div style="left:210px;top:47px;width:1px;height:22px;background:#FFFFFF"></div>
<div style="left:212px;top:48px;width:1px;height:20px;background:#FFFFFF"></div>
<div style="left:213px;top:48px;width:1px;height:20px;background:#FFFFFF"></div>
<div style="left:214px;top:48px;width:1px;height:20px;background:#ACA899"></div>
<svg style="left:221px;top:50px" width="18" height="16" viewBox="0 0 18 16"><rect x="1.500" y="1.500" width="10" height="14" fill="none" stroke="#fff"/><rect x="0.500" y="0.500" width="10" height="14" fill="#F8F7F2" stroke="#ACA899"/><path d="M2.500 3.500h3M2.500 5.500h6M2.500 7.500h6M2.500 9.500h6M2.500 11.500h4" stroke="#ACA899"/><path d="M15 2v9.500M12.500 11.500h5l-2.500 3.500z" stroke="#fff" stroke-width="1.600" fill="#fff"/><path d="M14 2v9" stroke="#ACA899" stroke-width="2"/><path d="M10.800 10.500h6.400l-3.200 4z" fill="#ACA899"/></svg>
<svg style="left:245px;top:49px" width="16" height="17" viewBox="0 0 16 17"><ellipse cx="8" cy="8.500" rx="7" ry="7.500" fill="#fff"/><ellipse cx="7.200" cy="7.500" rx="7.200" ry="7.500" fill="#ACA899"/><path d="M4.500 3c.5 2 1.500 3 2.700 4.500c1.200-1.500 2.200-2.500 2.700-4.500M4.500 12.500c.5-2 1.500-3 2.700-4.500c1.200 1.500 2.200 2.500 2.700 4.500" stroke="#F4F2EA" stroke-width="1.600" fill="none"/></svg>
<svg style="left:268px;top:52px" width="15" height="11" viewBox="0 0 15 11"><path d="M0.500 4.500h7.500v-3l6 3.500l-6 5v-2.500h-7.500z" fill="#7A7A08"/><path d="M0 3.500c0-1 1-1.500 2-1.500h6v-2l6 4.300l-2.500 1.200h-10.500c-.7-.3-1-1-1-2z" fill="#F6F628"/></svg>
<svg style="left:292px;top:50px" width="16" height="16" viewBox="0 0 16 16"><g transform="translate(1,1)"><path d="M0 8h8.500v-2.500l5.500 4.500l-5.500 4.500v-2.500h-8.500z" fill="#fff"/></g><path d="M0 8h8.500v-2.500l5.500 4.500l-5.500 4.500v-2.500h-8.500z" fill="#ACA899"/><path d="M3.500 6.500c-1-2 0-4.500 3-4.500c2.500 0 3.500 1 4.500 2.500" fill="none" stroke="#ACA899" stroke-width="1.800"/><path d="M14 1v5.500h-5.500z" fill="#ACA899"/></svg>
<div style="left:312px;top:48px;width:1px;height:20px;background:#ACA899"></div>
<div style="left:313px;top:48px;width:1px;height:20px;background:#FFFFFF"></div>
<svg style="left:320px;top:51px" width="14" height="14" viewBox="0 0 14 14"><rect x="0.500" y="0.500" width="13" height="13" fill="#fff" stroke="#000"/><rect x="1" y="1" width="12" height="2.500" fill="#000080"/><path d="M2.500 5.500l2 5.500l2-4.500l2 4.500l2-5.500" fill="none" stroke="#109010" stroke-width="1.200"/></svg>
<svg style="left:343px;top:57px" width="5" height="3"><path d="M0 0h5l-2.500 3z" fill="#000"/></svg>
<div style="left:354px;top:48px;width:1px;height:20px;background:#ACA899"></div>
<div style="left:355px;top:48px;width:1px;height:20px;background:#FFFFFF"></div>
<svg style="left:361px;top:50px" width="17" height="16" viewBox="0 0 17 16"><rect x="1" y="1" width="15.500" height="14" fill="#fff"/><rect x="0" y="0" width="15.500" height="14" fill="#ACA899"/><g transform="translate(1.500,0.800) scale(0.920)"><path d="M3.5 7.5V3.5a1 1 0 0 1 2 0V6.5V2a1 1 0 0 1 2 0V6.5V2.5a1 1 0 0 1 2 0V7V4.5a1 1 0 0 1 2 0V9.5c0 2.5-1.5 4-4 4c-2 0-3-.8-4-2.5L1 8.5c-.3-1 .8-1.6 1.6-.6z" fill="#ACA899" stroke="#fff" stroke-width="1.400"/></g><rect x="11.500" y="1" width="1" height="1" fill="#fff"/><rect x="13.500" y="1" width="1" height="1" fill="#fff"/></svg>
<svg style="left:385px;top:50px" width="16" height="16" viewBox="0 0 16 16"><g transform="translate(1,1)" style="color:#fff"><path d="M3.5 7.5V3.5a1 1 0 0 1 2 0V6.5V2a1 1 0 0 1 2 0V6.5V2.5a1 1 0 0 1 2 0V7V4.5a1 1 0 0 1 2 0V9.5c0 2.5-1.5 4-4 4c-2 0-3-.8-4-2.5L1 8.5c-.3-1 .8-1.6 1.6-.6z" fill="none" stroke="currentColor"/></g><g style="color:#ACA899"><path d="M3.5 7.5V3.5a1 1 0 0 1 2 0V6.5V2a1 1 0 0 1 2 0V6.5V2.5a1 1 0 0 1 2 0V7V4.5a1 1 0 0 1 2 0V9.5c0 2.5-1.5 4-4 4c-2 0-3-.8-4-2.5L1 8.5c-.3-1 .8-1.6 1.6-.6z" fill="none" stroke="currentColor"/></g></svg>
<svg style="left:407px;top:50px" width="17" height="16" viewBox="0 0 17 16"><defs><clipPath id="tri1"><path d="M0 0h16l-16 14z"/></clipPath><clipPath id="tri2"><path d="M17 0v16h-17v-1.500z"/></clipPath></defs><path d="M0 0h16l-16 14z" fill="#ACA899"/><g transform="translate(2,0.800) scale(0.920)"><g clip-path="url(#tri1)"><path d="M3.5 7.5V3.5a1 1 0 0 1 2 0V6.5V2a1 1 0 0 1 2 0V6.5V2.5a1 1 0 0 1 2 0V7V4.5a1 1 0 0 1 2 0V9.5c0 2.5-1.5 4-4 4c-2 0-3-.8-4-2.5L1 8.5c-.3-1 .8-1.6 1.6-.6z" fill="none" stroke="#fff" stroke-width="1.400"/></g></g><g clip-path="url(#tri2)"><g transform="translate(3,1.800) scale(0.920)"><path d="M3.5 7.5V3.5a1 1 0 0 1 2 0V6.5V2a1 1 0 0 1 2 0V6.5V2.5a1 1 0 0 1 2 0V7V4.5a1 1 0 0 1 2 0V9.5c0 2.5-1.5 4-4 4c-2 0-3-.8-4-2.5L1 8.5c-.3-1 .8-1.6 1.6-.6z" fill="none" stroke="#fff" stroke-width="1.200"/></g><g transform="translate(2,0.800) scale(0.920)"><path d="M3.5 7.5V3.5a1 1 0 0 1 2 0V6.5V2a1 1 0 0 1 2 0V6.5V2.5a1 1 0 0 1 2 0V7V4.5a1 1 0 0 1 2 0V9.5c0 2.5-1.5 4-4 4c-2 0-3-.8-4-2.5L1 8.5c-.3-1 .8-1.6 1.6-.6z" fill="none" stroke="#ACA899" stroke-width="1.200"/></g></g><path d="M16.500 0l-16.500 14.500" stroke="#fff" stroke-width="1.400"/></svg>
<svg style="left:430px;top:50px" width="16" height="16" viewBox="0 0 16 16"><g transform="translate(1,1)" style="color:#fff"><path d="M3.5 7.5V3.5a1 1 0 0 1 2 0V6.5V2a1 1 0 0 1 2 0V6.5V2.5a1 1 0 0 1 2 0V7V4.5a1 1 0 0 1 2 0V9.5c0 2.5-1.5 4-4 4c-2 0-3-.8-4-2.5L1 8.5c-.3-1 .8-1.6 1.6-.6z" fill="none" stroke="currentColor"/><path d="M3 8l3 1l2-1l2 1.500l-2 1.500l1 2.500l-3-1.500l-2 1l.5-3z" fill="currentColor"/></g><g style="color:#ACA899"><path d="M3.5 7.5V3.5a1 1 0 0 1 2 0V6.5V2a1 1 0 0 1 2 0V6.5V2.5a1 1 0 0 1 2 0V7V4.5a1 1 0 0 1 2 0V9.5c0 2.5-1.5 4-4 4c-2 0-3-.8-4-2.5L1 8.5c-.3-1 .8-1.6 1.6-.6z" fill="none" stroke="currentColor"/><path d="M3 8l3 1l2-1l2 1.500l-2 1.500l1 2.500l-3-1.500l-2 1l.5-3z" fill="currentColor"/></g></svg>
<svg style="left:453px;top:50px" width="16" height="16" viewBox="0 0 16 16"><g transform="translate(1,1)" style="color:#fff"><path d="M3.5 7.5V3.5a1 1 0 0 1 2 0V6.5V2a1 1 0 0 1 2 0V6.5V2.5a1 1 0 0 1 2 0V7V4.5a1 1 0 0 1 2 0V9.5c0 2.5-1.5 4-4 4c-2 0-3-.8-4-2.5L1 8.5c-.3-1 .8-1.6 1.6-.6z" fill="none" stroke="currentColor"/><path d="M1.500 6.500c-1 1-1 3 0 4.500" fill="none" stroke="currentColor"/></g><g style="color:#ACA899"><path d="M3.5 7.5V3.5a1 1 0 0 1 2 0V6.5V2a1 1 0 0 1 2 0V6.5V2.5a1 1 0 0 1 2 0V7V4.5a1 1 0 0 1 2 0V9.5c0 2.5-1.5 4-4 4c-2 0-3-.8-4-2.5L1 8.5c-.3-1 .8-1.6 1.6-.6z" fill="none" stroke="currentColor"/><path d="M1.500 6.500c-1 1-1 3 0 4.500" fill="none" stroke="currentColor"/></g></svg>
<svg style="left:476px;top:50px" width="16" height="16" viewBox="0 0 16 16"><g transform="translate(1,1)" style="color:#fff"><path d="M3.5 7.5V3.5a1 1 0 0 1 2 0V6.5V2a1 1 0 0 1 2 0V6.5V2.5a1 1 0 0 1 2 0V7V4.5a1 1 0 0 1 2 0V9.5c0 2.5-1.5 4-4 4c-2 0-3-.8-4-2.5L1 8.5c-.3-1 .8-1.6 1.6-.6z" fill="none" stroke="currentColor"/><path d="M1.500 6.500c-1 1-1 3 0 4.500" fill="none" stroke="currentColor"/></g><g style="color:#ACA899"><path d="M3.5 7.5V3.5a1 1 0 0 1 2 0V6.5V2a1 1 0 0 1 2 0V6.5V2.5a1 1 0 0 1 2 0V7V4.5a1 1 0 0 1 2 0V9.5c0 2.5-1.5 4-4 4c-2 0-3-.8-4-2.5L1 8.5c-.3-1 .8-1.6 1.6-.6z" fill="none" stroke="currentColor"/><path d="M1.500 6.500c-1 1-1 3 0 4.500" fill="none" stroke="currentColor"/></g></svg>
<div style="left:498px;top:48px;width:1px;height:20px;background:#ACA899"></div>
<div style="left:499px;top:48px;width:1px;height:20px;background:#FFFFFF"></div>
<svg style="left:506px;top:50px" width="16" height="16" viewBox="0 0 16 16"><g transform="translate(1,1)" style="color:#fff"><path d="M4.5 3.500c-1.500 0-2 .500-2 2v1.500c0 1-.500 1.500-1.500 1.500c1 0 1.500.500 1.500 1.500v1.500c0 1.500.500 2 2 2" fill="none" stroke="currentColor" stroke-width="1.700"/><path d="M9.5 3.500c1.500 0 2 .500 2 2v1.500c0 1 .500 1.500 1.500 1.500c-1 0-1.500.500-1.500 1.500v1.500c0 1.500-.500 2-2 2" fill="none" stroke="currentColor" stroke-width="1.700"/><path d="M0.500 0.700h4.500c1.500 0 2 .800 2 2v3.500" fill="none" stroke="currentColor" stroke-width="1.400"/><path d="M4.500 5.500h5l-2.500 3z" fill="currentColor"/></g><g style="color:#ACA899"><path d="M4.5 3.500c-1.500 0-2 .500-2 2v1.500c0 1-.500 1.500-1.500 1.500c1 0 1.500.500 1.500 1.500v1.500c0 1.500.500 2 2 2" fill="none" stroke="currentColor" stroke-width="1.700"/><path d="M9.5 3.500c1.500 0 2 .500 2 2v1.500c0 1 .500 1.500 1.500 1.500c-1 0-1.500.500-1.500 1.500v1.500c0 1.500-.500 2-2 2" fill="none" stroke="currentColor" stroke-width="1.700"/><path d="M0.500 0.700h4.500c1.500 0 2 .800 2 2v3.500" fill="none" stroke="currentColor" stroke-width="1.400"/><path d="M4.500 5.500h5l-2.500 3z" fill="currentColor"/></g></svg>
<svg style="left:529px;top:50px" width="16" height="16" viewBox="0 0 16 16"><g transform="translate(1,1)" style="color:#fff"><path d="M4.5 3.500c-1.500 0-2 .500-2 2v1.500c0 1-.500 1.500-1.500 1.500c1 0 1.500.500 1.500 1.500v1.500c0 1.500.500 2 2 2" fill="none" stroke="currentColor" stroke-width="1.700"/><path d="M6.5 3.500c1.500 0 2 .500 2 2v1.500c0 1 .500 1.500 1.500 1.500c-1 0-1.500.500-1.500 1.500v1.500c0 1.500-.500 2-2 2" fill="none" stroke="currentColor" stroke-width="1.700"/><path d="M0 0.700h12.500v5" fill="none" stroke="currentColor" stroke-width="1.400"/><path d="M10 5.500h5l-2.500 3z" fill="currentColor"/></g><g style="color:#ACA899"><path d="M4.5 3.500c-1.500 0-2 .500-2 2v1.500c0 1-.500 1.500-1.500 1.500c1 0 1.500.500 1.500 1.500v1.500c0 1.500.500 2 2 2" fill="none" stroke="currentColor" stroke-width="1.700"/><path d="M6.5 3.500c1.500 0 2 .500 2 2v1.500c0 1 .500 1.500 1.500 1.500c-1 0-1.500.500-1.500 1.500v1.500c0 1.500-.500 2-2 2" fill="none" stroke="currentColor" stroke-width="1.700"/><path d="M0 0.700h12.500v5" fill="none" stroke="currentColor" stroke-width="1.400"/><path d="M10 5.500h5l-2.500 3z" fill="currentColor"/></g></svg>
<svg style="left:551px;top:50px" width="17" height="16" viewBox="0 0 17 16"><g transform="translate(1,1)" style="color:#fff"><path d="M3.5 3.500c-1.500 0-2 .500-2 2v1.500c0 1-.500 1.500-1.500 1.500c1 0 1.500.500 1.500 1.500v1.500c0 1.500.500 2 2 2" fill="none" stroke="currentColor" stroke-width="1.700"/><path d="M7 3.500c1.500 0 2 .500 2 2v1.500c0 1 .500 1.500 1.500 1.500c-1 0-1.500.500-1.500 1.500v1.500c0 1.500-.500 2-2 2" fill="none" stroke="currentColor" stroke-width="1.700"/><path d="M5.500 8v-5c0-1.800 1-2.300 2.500-2.300h3c1.500 0 2.500.500 2.500 2.300v3" fill="none" stroke="currentColor" stroke-width="1.400"/><path d="M11 5.500h5l-2.500 3z" fill="currentColor"/></g><g style="color:#ACA899"><path d="M3.5 3.500c-1.500 0-2 .500-2 2v1.500c0 1-.500 1.500-1.500 1.500c1 0 1.500.500 1.500 1.500v1.500c0 1.500.500 2 2 2" fill="none" stroke="currentColor" stroke-width="1.700"/><path d="M7 3.500c1.500 0 2 .500 2 2v1.500c0 1 .500 1.500 1.500 1.500c-1 0-1.500.500-1.500 1.500v1.500c0 1.500-.500 2-2 2" fill="none" stroke="currentColor" stroke-width="1.700"/><path d="M5.500 8v-5c0-1.800 1-2.300 2.500-2.300h3c1.500 0 2.500.500 2.500 2.300v3" fill="none" stroke="currentColor" stroke-width="1.400"/><path d="M11 5.500h5l-2.500 3z" fill="currentColor"/></g></svg>
<svg style="left:574px;top:50px" width="17" height="16" viewBox="0 0 17 16"><g transform="translate(1,1)" style="color:#fff"><path d="M10.5 3.500c-1.500 0-2 .500-2 2v1.500c0 1-.500 1.500-1.500 1.500c1 0 1.500.500 1.500 1.500v1.500c0 1.500.500 2 2 2" fill="none" stroke="currentColor" stroke-width="1.700"/><path d="M12 3.500c1.500 0 2 .500 2 2v1.500c0 1 .500 1.500 1.500 1.500c-1 0-1.500.500-1.500 1.500v1.500c0 1.500-.500 2-2 2" fill="none" stroke="currentColor" stroke-width="1.700"/><path d="M0 4.500h5" stroke="currentColor" stroke-width="1.400"/><path d="M4 2l3.500 2.500l-3.500 2.500z" fill="currentColor"/></g><g style="color:#ACA899"><path d="M10.5 3.500c-1.500 0-2 .500-2 2v1.500c0 1-.500 1.500-1.500 1.500c1 0 1.500.500 1.500 1.500v1.500c0 1.500.500 2 2 2" fill="none" stroke="currentColor" stroke-width="1.700"/><path d="M12 3.500c1.500 0 2 .500 2 2v1.500c0 1 .500 1.500 1.500 1.500c-1 0-1.500.500-1.500 1.500v1.500c0 1.500-.500 2-2 2" fill="none" stroke="currentColor" stroke-width="1.700"/><path d="M0 4.500h5" stroke="currentColor" stroke-width="1.400"/><path d="M4 2l3.500 2.500l-3.500 2.500z" fill="currentColor"/></g></svg>
<svg style="left:598px;top:50px" width="16" height="16" viewBox="0 0 16 16"><g transform="translate(1,1)" style="color:#fff"><g transform="translate(0,-2.500) scale(1,0.800)"><path d="M5.5 3.500c-1.500 0-2 .500-2 2v1.500c0 1-.500 1.500-1.500 1.500c1 0 1.500.500 1.500 1.500v1.500c0 1.500.500 2 2 2" fill="none" stroke="currentColor" stroke-width="1.700"/><path d="M8.5 3.500c1.500 0 2 .500 2 2v1.500c0 1 .500 1.500 1.500 1.500c-1 0-1.500.500-1.500 1.500v1.500c0 1.500-.500 2-2 2" fill="none" stroke="currentColor" stroke-width="1.700"/><path d="M2 3.500h3.500c1.500 0 2 .800 2 2v3" fill="none" stroke="currentColor" stroke-width="1.400"/><path d="M5 7.500h5l-2.500 3z" fill="currentColor"/></g><text x="1.500" y="15.500" font-family="Liberation Sans,sans-serif" font-size="6.500" font-weight="bold" fill="currentColor" textLength="13">ASM</text></g><g style="color:#ACA899"><g transform="translate(0,-2.500) scale(1,0.800)"><path d="M5.5 3.500c-1.500 0-2 .500-2 2v1.500c0 1-.500 1.500-1.500 1.500c1 0 1.500.500 1.500 1.500v1.500c0 1.500.500 2 2 2" fill="none" stroke="currentColor" stroke-width="1.700"/><path d="M8.5 3.500c1.500 0 2 .500 2 2v1.500c0 1 .500 1.500 1.500 1.500c-1 0-1.500.500-1.500 1.500v1.500c0 1.500-.500 2-2 2" fill="none" stroke="currentColor" stroke-width="1.700"/><path d="M2 3.500h3.500c1.500 0 2 .800 2 2v3" fill="none" stroke="currentColor" stroke-width="1.400"/><path d="M5 7.500h5l-2.500 3z" fill="currentColor"/></g><text x="1.500" y="15.500" font-family="Liberation Sans,sans-serif" font-size="6.500" font-weight="bold" fill="currentColor" textLength="13">ASM</text></g></svg>
<svg style="left:621px;top:50px" width="17" height="16" viewBox="0 0 17 16"><g transform="translate(1,1)" style="color:#fff"><g transform="translate(0,-2.500) scale(1,0.800)"><path d="M5.5 3.500c-1.500 0-2 .500-2 2v1.500c0 1-.500 1.500-1.500 1.500c1 0 1.500.500 1.500 1.500v1.500c0 1.500.500 2 2 2" fill="none" stroke="currentColor" stroke-width="1.700"/><path d="M7.5 3.500c1.500 0 2 .500 2 2v1.500c0 1 .500 1.500 1.500 1.500c-1 0-1.500.500-1.500 1.500v1.500c0 1.500-.500 2-2 2" fill="none" stroke="currentColor" stroke-width="1.700"/><path d="M1 3.500h12.500v4" fill="none" stroke="currentColor" stroke-width="1.400"/><path d="M11 7h5l-2.500 3.500z" fill="currentColor"/></g><text x="1.500" y="15.500" font-family="Liberation Sans,sans-serif" font-size="6.500" font-weight="bold" fill="currentColor" textLength="13">ASM</text></g><g style="color:#ACA899"><g transform="translate(0,-2.500) scale(1,0.800)"><path d="M5.5 3.500c-1.500 0-2 .500-2 2v1.500c0 1-.500 1.500-1.500 1.500c1 0 1.500.500 1.500 1.500v1.500c0 1.500.500 2 2 2" fill="none" stroke="currentColor" stroke-width="1.700"/><path d="M7.5 3.500c1.500 0 2 .500 2 2v1.500c0 1 .500 1.500 1.500 1.500c-1 0-1.500.500-1.500 1.500v1.500c0 1.500-.500 2-2 2" fill="none" stroke="currentColor" stroke-width="1.700"/><path d="M1 3.500h12.500v4" fill="none" stroke="currentColor" stroke-width="1.400"/><path d="M11 7h5l-2.500 3.500z" fill="currentColor"/></g><text x="1.500" y="15.500" font-family="Liberation Sans,sans-serif" font-size="6.500" font-weight="bold" fill="currentColor" textLength="13">ASM</text></g></svg>
<svg style="left:644px;top:50px" width="17" height="16" viewBox="0 0 17 16"><g transform="translate(1,1)" style="color:#fff"><g transform="translate(0,-2.500) scale(1,0.800)"><path d="M4.5 3.500c-1.500 0-2 .500-2 2v1.500c0 1-.500 1.500-1.500 1.500c1 0 1.500.500 1.500 1.500v1.500c0 1.500.500 2 2 2" fill="none" stroke="currentColor" stroke-width="1.700"/><path d="M8 3.500c1.500 0 2 .500 2 2v1.500c0 1 .500 1.500 1.500 1.500c-1 0-1.500.500-1.500 1.500v1.500c0 1.500-.500 2-2 2" fill="none" stroke="currentColor" stroke-width="1.700"/><path d="M6.500 9v-3.500c0-1.500 1-2 2.500-2h2.500c1.500 0 2.500.500 2.500 2v2" fill="none" stroke="currentColor" stroke-width="1.400"/><path d="M11.500 7h5l-2.500 3.500z" fill="currentColor"/></g><text x="1.500" y="15.500" font-family="Liberation Sans,sans-serif" font-size="6.500" font-weight="bold" fill="currentColor" textLength="13">ASM</text></g><g style="color:#ACA899"><g transform="translate(0,-2.500) scale(1,0.800)"><path d="M4.5 3.500c-1.500 0-2 .500-2 2v1.500c0 1-.500 1.500-1.500 1.500c1 0 1.500.500 1.500 1.500v1.500c0 1.500.500 2 2 2" fill="none" stroke="currentColor" stroke-width="1.700"/><path d="M8 3.500c1.500 0 2 .500 2 2v1.500c0 1 .500 1.500 1.500 1.500c-1 0-1.500.500-1.500 1.500v1.500c0 1.500-.500 2-2 2" fill="none" stroke="currentColor" stroke-width="1.700"/><path d="M6.500 9v-3.500c0-1.500 1-2 2.500-2h2.500c1.500 0 2.500.500 2.500 2v2" fill="none" stroke="currentColor" stroke-width="1.400"/><path d="M11.500 7h5l-2.500 3.500z" fill="currentColor"/></g><text x="1.500" y="15.500" font-family="Liberation Sans,sans-serif" font-size="6.500" font-weight="bold" fill="currentColor" textLength="13">ASM</text></g></svg>
<div style="left:665px;top:48px;width:1px;height:20px;background:#ACA899"></div>
<div style="left:666px;top:48px;width:1px;height:20px;background:#FFFFFF"></div>
<svg style="left:673px;top:50px" width="16" height="16" viewBox="0 0 16 16"><g transform="translate(1,1)" style="color:#fff"><path d="M0.500 0.500h11v13h-11z" fill="none" stroke="currentColor"/><path d="M2 2.500h8M2 4.500h8M2 6.500h5M2 8.500h5M2 10.500h5" stroke="currentColor"/><rect x="8" y="7" width="7" height="7" fill="currentColor"/></g><g style="color:#ACA899"><path d="M0.500 0.500h11v13h-11z" fill="none" stroke="currentColor"/><path d="M2 2.500h8M2 4.500h8M2 6.500h5M2 8.500h5M2 10.500h5" stroke="currentColor"/><rect x="8" y="7" width="7" height="7" fill="currentColor"/></g><path d="M10 13v-4.500h3.500M10 11h2.500" stroke="#ECE9D8" fill="none"/></svg>
<svg style="left:695px;top:50px" width="17" height="16" viewBox="0 0 17 16"><path d="M3.500 0.500h10v13h-10z" fill="#fff" stroke="#000"/><path d="M5 2.500h7M5 4.500h7" stroke="#000"/><path d="M9 11.500h3" stroke="#808080"/><ellipse cx="6" cy="7.500" rx="6" ry="3" fill="#18B018"/><ellipse cx="6" cy="7.500" rx="2.500" ry="1.800" fill="#fff"/><circle cx="6" cy="7.500" r="1.300" fill="#000"/><path d="M1 11c2 2 6 2 8 0l3-2l3 1.500" fill="none" stroke="#1830C0" stroke-width="1.600"/><ellipse cx="5" cy="14" rx="4" ry="1.500" fill="#18B018"/></svg>
<svg style="left:718px;top:50px" width="17" height="16" viewBox="0 0 17 16"><rect x="4.500" y="0.500" width="11" height="11" fill="#fff" stroke="#000"/><rect x="5" y="1" width="10" height="2.500" fill="#000080"/><path d="M7 5.500h3M11 5.500h3M7 7.500h3M11 7.500h3M11 9.500h3" stroke="#808080"/><rect x="0.500" y="5.500" width="6" height="8" fill="#D4D0C8" stroke="#606060"/><path d="M2 8h3M2 10h3M2 12h3" stroke="#404040"/><rect x="7.500" y="9.500" width="4" height="5" fill="#fff" stroke="#404040"/></svg>
<svg style="left:741px;top:50px" width="17" height="16" viewBox="0 0 17 16"><path d="M0.500 13.500v-11.500c0-1 .500-1.500 1.500-1.500h3.500c1 0 1.500.500 1.500 1.500v.500h6.500v11z" fill="#F8F090" stroke="#B0A850"/><path d="M1.500 4h12" stroke="#FFFCC8"/><g transform="translate(7,3) scale(0.700,0.850)"><path d="M3.5 7.5V3.5a1 1 0 0 1 2 0V6.5V2a1 1 0 0 1 2 0V6.5V2.5a1 1 0 0 1 2 0V7V4.5a1 1 0 0 1 2 0V9.5c0 2.5-1.5 4-4 4c-2 0-3-.8-4-2.5L1 8.5c-.3-1 .8-1.6 1.6-.6z" fill="#fff" stroke="#000" stroke-width="1.400"/></g></svg>
<svg style="left:765px;top:50px" width="17" height="16" viewBox="0 0 17 16"><path d="M0.500 0.500h11v13h-11z" fill="#fff" stroke="#808080"/><path d="M0 13.500h12M11.500 0v14" stroke="#000"/><path d="M2 2.500h8M2 4.500h8M2 6.500h8M2 8.500h8M2 10.500h8" stroke="#808080"/><g transform="translate(7,3) scale(0.700,0.850)"><path d="M3.5 7.5V3.5a1 1 0 0 1 2 0V6.5V2a1 1 0 0 1 2 0V6.5V2.5a1 1 0 0 1 2 0V7V4.5a1 1 0 0 1 2 0V9.5c0 2.5-1.5 4-4 4c-2 0-3-.8-4-2.5L1 8.5c-.3-1 .8-1.6 1.6-.6z" fill="#fff" stroke="#000" stroke-width="1.400"/></g></svg>
<svg style="left:788px;top:50px" width="17" height="16" viewBox="0 0 17 16"><path d="M0.500 0.500h11v13h-11z" fill="#fff" stroke="#808080"/><path d="M0 13.500h12M11.500 0v14" stroke="#000"/><path d="M2 2.500h8M2 4.500h8M2 6.500h8M2 8.500h8M2 10.500h8" stroke="#808080"/><rect x="6.500" y="3.500" width="8" height="10" fill="#fff" stroke="#000"/><path d="M8 5.500h5M8 7.500h5M8 9.500h5" stroke="#109090" stroke-width="1.200"/><rect x="11" y="11" width="2.500" height="2" fill="#808080"/></svg>
<div style="left:660px;top:73px;width:1px;height:20px;background:#ACA899"></div>
<div style="left:661px;top:73px;width:1px;height:20px;background:#FFFFFF"></div>
<svg style="left:666px;top:74px" width="16" height="15" viewBox="0 0 16 15"><path d="M2.500 9.500h8v-3l5 4l-5 4.500v-3h-8z" fill="#8A8A10"/><path d="M1.500 8c0-1 .500-1.500 1.500-1.500h7.500v-2l5 4.500l-2.500 1h-11c-.500-.500-.500-1-.500-2z" fill="#F6F628"/><circle cx="4.500" cy="4" r="3.600" fill="#D81010"/><path d="M3 6l1.500-4.200l1.500 4.200M3.500 4.800h2" stroke="#F8D0D0" stroke-width="0.900" fill="none"/></svg>
<svg style="left:689px;top:74px" width="18" height="16" viewBox="0 0 18 16"><rect x="4.500" y="1.500" width="6" height="5" fill="#fff" stroke="#000"/><rect x="7.500" y="3.500" width="6" height="5" fill="#1828B0" stroke="#000"/><rect x="9.500" y="5.500" width="5" height="2" fill="#40D8F0"/><rect x="10.500" y="7.500" width="6" height="5.500" fill="#F8F030" stroke="#000"/><path d="M0.500 8h2.500v6.500h-2.500z" fill="#1838E8"/><path d="M3 9c2-1.500 4-1.500 6-.500l4.500 4.500l-1.500 1.500l-2.500-2l-2 3h-2.500l-2-1z" fill="#fff" stroke="#000" stroke-width="0.900"/><path d="M6.500 14l3.500-4.500" stroke="#000" stroke-width="0.800"/></svg>
<div style="left:710px;top:72px;width:1px;height:22px;background:#ACA899"></div>
<div style="left:711px;top:72px;width:1px;height:22px;background:#FFFFFF"></div>
<div style="left:721px;top:72px;width:1px;height:22px;background:#ACA899"></div>
<div style="left:722px;top:72px;width:1px;height:22px;background:#FFFFFF"></div>
<div style="left:723px;top:72px;width:1px;height:22px;background:#FFFFFF"></div>
<div style="left:724px;top:72px;width:1px;height:22px;background:#E6E3D4"></div>
<div style="left:725px;top:72px;width:1px;height:21px;background:#FFFFFF"></div>
<div style="left:727px;top:72px;width:1px;height:22px;background:#ACA899"></div>
<svg style="left:734px;top:75px" width="17" height="14" viewBox="0 0 17 14"><path d="M10 3c1-2 3-2.500 4.500-1" fill="none" stroke="#000"/><path d="M15.500 0.500v3h-3" fill="none" stroke="#000"/><path d="M0.500 12.500v-9h4l1 1.500h6v2" fill="#F0E890" stroke="#000"/><path d="M0.500 12.500l3-5.500h12l-3.500 5.500z" fill="#8A8A20" stroke="#000"/></svg>
<div style="left:755px;top:73px;width:1px;height:20px;background:#ACA899"></div>
<div style="left:756px;top:73px;width:1px;height:20px;background:#FFFFFF"></div>
<svg width="0" height="0" style="left:0;top:0"><defs><pattern id="dots" width="2" height="2" patternUnits="userSpaceOnUse"><rect width="2" height="2" fill="#E8E070"/><rect width="1" height="1" fill="#A0A0A0"/><rect x="1" y="1" width="1" height="1" fill="#A0A0A0"/></pattern></defs></svg>
<svg style="left:763px;top:75px" width="15" height="15" viewBox="0 0 15 15"><rect x="0" y="0" width="15" height="15" fill="#000"/><rect x="1" y="1" width="13" height="2" fill="#0000C8"/><rect x="11" y="1" width="3" height="2" fill="#fff"/><rect x="1" y="4" width="13" height="8" fill="url(#dots)"/><rect x="1" y="13" width="8" height="1" fill="#fff"/><rect x="10" y="13" width="1" height="1" fill="#fff"/><rect x="13" y="13" width="1" height="1" fill="#fff"/><path d="M2.500 0.500v9M-1.500 4.500h8M-0.500 1.500l6 6M5.500 1.500l-6 6" stroke="#F4F030" stroke-width="1.300"/><path d="M4 3l2-2" stroke="#C8D0FF" stroke-width="0.800"/></svg>
<svg style="left:786px;top:75px" width="15" height="15" viewBox="0 0 15 15"><rect x="0" y="0" width="15" height="15" fill="#000"/><rect x="1" y="1" width="13" height="2" fill="#0000C8"/><rect x="11" y="1" width="3" height="2" fill="#fff"/><rect x="1" y="4" width="13" height="8" fill="url(#dots)"/><rect x="1" y="13" width="8" height="1" fill="#fff"/><rect x="10" y="13" width="1" height="1" fill="#fff"/><rect x="13" y="13" width="1" height="1" fill="#fff"/><rect x="1" y="1" width="2" height="2" fill="#fff"/><path d="M0 14.500v-8.500h3.500l1 1h5v3" fill="#F4F080" stroke="#000" stroke-width="0.900"/><path d="M0.500 14.500l3-5h10.500l-3.500 5z" fill="#8A8A20" stroke="#000" stroke-width="0.900"/></svg>
<svg style="left:809px;top:75px" width="16" height="15" viewBox="0 0 16 15"><rect x="0" y="0" width="15" height="15" fill="#000"/><rect x="1" y="1" width="13" height="2" fill="#0000C8"/><rect x="11" y="1" width="3" height="2" fill="#fff"/><rect x="1" y="4" width="13" height="8" fill="url(#dots)"/><rect x="1" y="13" width="8" height="1" fill="#fff"/><rect x="10" y="13" width="1" height="1" fill="#fff"/><rect x="13" y="13" width="1" height="1" fill="#fff"/><rect x="1" y="1" width="2" height="2" fill="#fff"/><rect x="0.500" y="5.500" width="9" height="9" fill="#404000" stroke="#000"/><rect x="2" y="6" width="5" height="3.500" fill="#E8E8C0"/><rect x="3" y="11" width="4" height="3.500" fill="#C0C0A0"/><rect x="4" y="12" width="1" height="2" fill="#000"/></svg>
<svg style="left:832px;top:75px" width="15" height="15" viewBox="0 0 15 15"><rect x="0" y="0" width="15" height="15" fill="#000"/><rect x="1" y="1" width="13" height="2" fill="#0000C8"/><rect x="11" y="1" width="3" height="2" fill="#fff"/><rect x="1" y="4" width="13" height="8" fill="url(#dots)"/><rect x="1" y="13" width="8" height="1" fill="#fff"/><rect x="10" y="13" width="1" height="1" fill="#fff"/><rect x="13" y="13" width="1" height="1" fill="#fff"/><rect x="1" y="1" width="2" height="2" fill="#fff"/><path d="M4.500 6l6.500 6.500M11 6l-6.500 6.500" stroke="#D01818" stroke-width="2"/></svg>
<div style="left:853px;top:73px;width:1px;height:20px;background:#ACA899"></div>
<div style="left:854px;top:73px;width:1px;height:20px;background:#FFFFFF"></div>
<svg style="left:861px;top:74px" width="16" height="16" viewBox="0 0 16 16"><text x="0" y="12.500" font-family="Liberation Serif,serif" font-size="17" font-weight="bold" fill="#ACA899" textLength="11">T</text><path d="M6 14.500v-6h3l1 1h4v1.500" fill="#F0E890" stroke="#000" stroke-width="0.800"/><path d="M6 14.500l2-3.500h7.500l-2 3.500z" fill="#F8F060" stroke="#000" stroke-width="0.800"/></svg>
<svg style="left:884px;top:74px" width="17" height="17" viewBox="0 0 17 17"><text x="1" y="13.500" font-family="Liberation Serif,serif" font-size="17" font-weight="bold" fill="#fff" textLength="11">T</text><text x="0" y="12.500" font-family="Liberation Serif,serif" font-size="17" font-weight="bold" fill="#ACA899" textLength="11">T</text><path d="M9.500 9.500l5 5M14.500 9.500l-5 5" stroke="#fff" stroke-width="1.800" transform="translate(1,1)"/><path d="M9.500 9.500l5 5M14.500 9.500l-5 5" stroke="#ACA899" stroke-width="1.800"/></svg>
<div style="left:905px;top:73px;width:1px;height:20px;background:#ACA899"></div>
<div style="left:906px;top:73px;width:1px;height:20px;background:#FFFFFF"></div>
<svg style="left:914px;top:74px" width="12" height="16" viewBox="0 0 12 16"><text x="0.500" y="13.500" font-family="Liberation Sans,sans-serif" font-size="16" font-weight="bold" fill="#F8F020" stroke="#000" stroke-width="0.800" textLength="9">?</text></svg>
<div style="left:932px;top:72px;width:1px;height:22px;background:#ACA899"></div>
<div style="left:933px;top:72px;width:1px;height:22px;background:#FFFFFF"></div>
<svg style="left:4px;top:106px" width="14" height="15" viewBox="0 0 14 15"><path d="M0.500 0.500h9l4 4v10h-13z" fill="#fff" stroke="#000"/><path d="M9.500 0.500v4h4" fill="none" stroke="#000"/><text x="1.500" y="7" font-family="Liberation Sans,sans-serif" font-size="7" font-weight="bold" fill="#0A7A0A">S</text><text x="4.800" y="10.500" font-family="Liberation Sans,sans-serif" font-size="7" font-weight="bold" fill="#0A7A0A">R</text><text x="8" y="14" font-family="Liberation Sans,sans-serif" font-size="7" font-weight="bold" fill="#0A7A0A">C</text></svg>
<svg style="left:2px;top:126px" width="18" height="16" viewBox="0 0 18 16"><path d="M10 8.500l2 3" stroke="#808080" stroke-width="0.800"/><circle cx="5.500" cy="6" r="3.700" fill="none" stroke="#1828C0" stroke-width="2.400" stroke-dasharray="1.700 1.200"/><circle cx="5.500" cy="6" r="3" fill="#fff" stroke="#1828C0" stroke-width="1.600"/><circle cx="5.500" cy="6" r="1" fill="#1828C0"/><path d="M14.500 2.500l2.500 2.500l-3.500 3l-2.500-2.500z" fill="#E838C8" stroke="#000" stroke-width="0.700"/><path d="M13.500 9l2.500 2.500l-3.500 3l-2.500-2.500z" fill="#38D8D8" stroke="#000" stroke-width="0.700"/></svg>
<svg style="left:3px;top:148px" width="17" height="16" viewBox="0 0 17 16"><g transform="translate(1,1)" style="color:#fff"><rect x="3" y="0" width="8" height="7" fill="currentColor"/><rect x="7" y="4" width="8" height="7" fill="currentColor"/><rect x="9" y="8" width="7" height="7" fill="currentColor"/><path d="M0 9h5v-2l3 3l-3 3v-2h-5z" fill="currentColor"/></g><g style="color:#ACA899"><rect x="3" y="0" width="8" height="7" fill="currentColor"/><rect x="7" y="4" width="8" height="7" fill="currentColor"/><rect x="9" y="8" width="7" height="7" fill="currentColor"/><path d="M0 9h5v-2l3 3l-3 3v-2h-5z" fill="currentColor"/></g></svg>
<svg style="left:3px;top:170px" width="17" height="15" viewBox="0 0 17 15"><rect x="1.500" y="1.500" width="15" height="13" fill="none" stroke="#fff"/><rect x="0.500" y="0.500" width="15" height="13" fill="none" stroke="#ACA899"/><text x="2.500" y="11" font-family="Liberation Sans,sans-serif" font-size="8" fill="#fff" textLength="12">Var</text><text x="2" y="10.500" font-family="Liberation Sans,sans-serif" font-size="8" fill="#ACA899" textLength="12">Var</text></svg>
<svg style="left:3px;top:190px" width="16" height="15" viewBox="0 0 16 15"><rect x="0.500" y="0.500" width="15" height="14" fill="#1838A0" stroke="#000"/><rect x="1" y="1" width="14" height="1" fill="#000060"/><rect x="1" y="2" width="14" height="1" fill="#fff"/><text x="4.500" y="12.500" font-family="Liberation Sans,sans-serif" font-size="11.500" font-weight="bold" fill="#fff">e</text></svg>
<svg style="left:7px;top:214px" width="14" height="16" viewBox="0 0 14 16"><text x="1" y="10" font-family="Liberation Sans,sans-serif" font-size="11" font-weight="bold" fill="#fff" textLength="6">P</text><text x="0" y="9" font-family="Liberation Sans,sans-serif" font-size="11" font-weight="bold" fill="#ACA899" textLength="6">P</text><text x="5" y="13" font-family="Liberation Sans,sans-serif" font-size="11" font-weight="bold" fill="#fff" textLength="6">P</text><text x="4" y="12" font-family="Liberation Sans,sans-serif" font-size="11" font-weight="bold" fill="#ACA899" textLength="6">P</text></svg>
<svg style="left:3px;top:232px" width="17" height="16" viewBox="0 0 17 16"><path d="M4.500 4.500h11v9l-1.500 1.500h-9.500z" fill="#fff" stroke="#000"/><path d="M6 9.500h8M6 11.500h8M6 13.500h7" stroke="#808080"/><path d="M4.500 0.500h11l-4 7.500h-11z" fill="#10D820" stroke="#003800"/><path d="M6.500 2.500h6M9.500 2.500l-2.500 4.500" stroke="#005800" stroke-width="1.600"/></svg>
<svg style="left:3px;top:254px" width="17" height="15" viewBox="0 0 17 15"><rect x="1.500" y="1.500" width="15" height="13" fill="none" stroke="#fff"/><rect x="0.500" y="0.500" width="15" height="13" fill="none" stroke="#ACA899"/><g transform="translate(1,1)" style="color:#fff"><circle cx="4.500" cy="9" r="2" fill="none" stroke="currentColor"/><circle cx="10.500" cy="9" r="2" fill="none" stroke="currentColor"/><path d="M3 8l2.500-4.500M9 8l2.500-4.500M6.500 9h2" stroke="currentColor" fill="none"/></g><g style="color:#ACA899"><circle cx="4.500" cy="9" r="2" fill="none" stroke="currentColor"/><circle cx="10.500" cy="9" r="2" fill="none" stroke="currentColor"/><path d="M3 8l2.500-4.500M9 8l2.500-4.500M6.500 9h2" stroke="currentColor" fill="none"/></g></svg>
<svg style="left:3px;top:274px" width="16" height="15" viewBox="0 0 16 15"><rect x="0.500" y="0.500" width="15" height="14" fill="#fff" stroke="#800000" stroke-width="1.400"/><text x="3" y="11" font-family="Liberation Mono,monospace" font-size="9" font-weight="bold" fill="#000" textLength="10">ax</text></svg>
<svg style="left:3px;top:296px" width="16" height="14" viewBox="0 0 16 14"><rect x="0.500" y="0.500" width="15" height="13" fill="#fff" stroke="#000080" stroke-width="1.200"/><rect x="1" y="1" width="14" height="2" fill="#000080"/><text x="2.500" y="12" font-family="Liberation Serif,serif" font-size="11" font-weight="bold" fill="#1838D0" textLength="11">M</text></svg>
<svg style="left:3px;top:317px" width="16" height="14" viewBox="0 0 16 14"><rect x="0" y="0" width="16" height="14" fill="#000"/><rect x="0" y="0" width="16" height="3" fill="#000080"/><text x="1.500" y="11" font-family="Liberation Mono,monospace" font-size="7" font-weight="bold" fill="#fff" textLength="13">MSG</text></svg>
<svg style="left:3px;top:337px" width="16" height="15" viewBox="0 0 16 15"><rect x="0.500" y="0.500" width="15" height="14" fill="#fff" stroke="#000" stroke-width="1.300"/><path d="M3.500 4.500a2.500 2.500 0 0 1 3.500-1l6 5a2.500 2.500 0 0 1-3 4l-6-5a2.500 2.500 0 0 1-.5-3z" fill="#C0C0C0" stroke="#000" stroke-width="0.900"/><circle cx="10" cy="9.500" r="2.800" fill="#20D820" stroke="#006000" stroke-width="0.800"/></svg>
<svg style="left:2px;top:358px" width="18" height="16" viewBox="0 0 18 16"><rect x="4.500" y="0.500" width="12" height="10" fill="#fff" stroke="#000"/><rect x="5" y="1" width="11" height="2" fill="#000080"/><path d="M10 5.500h5M10 7.500h4" stroke="#808080"/><circle cx="4.500" cy="8.500" r="3.300" fill="#E8E8F0" stroke="#000" stroke-width="1.200"/><circle cx="4.500" cy="8.500" r="1.500" fill="none" stroke="#4060C0" stroke-width="0.800"/><path d="M7 11l3.500 3.500" stroke="#000" stroke-width="1.800"/></svg>
<svg style="left:3px;top:380px" width="16" height="14" viewBox="0 0 16 14"><rect x="0" y="0" width="16" height="14" fill="#1020E0"/><rect x="0" y="0" width="16" height="3" fill="#000080"/><rect x="2" y="1" width="3" height="1" fill="#fff"/><text x="1" y="10.500" font-family="Liberation Mono,monospace" font-size="8" font-weight="bold" fill="#fff" textLength="13">si&gt;</text></svg>
<svg style="left:353px;top:722px" width="16" height="14" viewBox="0 0 16 14"><path d="M0.500 14v-11.500h4l1.500 2h8.500v9.500z" fill="#E8E4A8" stroke="#A8A468"/><circle cx="7" cy="8" r="3.600" fill="#A8F0F8" stroke="#808080" stroke-width="1.200"/><circle cx="6" cy="7" r="1.500" fill="#fff"/><path d="M9.500 10.500l4 4" stroke="#C01030" stroke-width="2"/></svg>
<svg style="left:370px;top:722px" width="15" height="14" viewBox="0 0 15 14"><rect x="4" y="2" width="8" height="10" fill="#909090"/><path d="M5 5h6M5 7h6" stroke="#D0D0D0"/><rect x="6" y="10" width="3" height="2" fill="#30D030"/><circle cx="7" cy="7.500" r="5.800" fill="none" stroke="#E01020" stroke-width="1.800"/><path d="M11 3.500l-8 8" stroke="#E01020" stroke-width="1.800"/></svg>
<svg style="left:386px;top:722px" width="15" height="14" viewBox="0 0 15 14"><circle cx="7" cy="7.500" r="7" fill="#E00010"/><path d="M7 3v5.500" stroke="#fff" stroke-width="2.400" stroke-linecap="round"/><circle cx="7" cy="11.500" r="1.400" fill="#fff"/></svg>
<svg style="left:546px;top:670px" width="17" height="15" viewBox="0 0 17 15"><circle cx="3" cy="4.500" r="2.200" fill="#F8F040"/><path d="M1.500 6.500h3v7h-3z" fill="#F8F040"/><path d="M4.500 9h2" stroke="#F8F040" stroke-width="1.500"/><path d="M4 4.500l6-3.500l6 5l-6 4z" fill="#901010" stroke="#400000" stroke-width="0.800"/><path d="M4 4.500v2.500l6 5.500v-2.500z" fill="#600808"/><path d="M10 10v2.500l6-4v-2.500z" fill="#E8E8E8" stroke="#000" stroke-width="0.700"/></svg>
<svg style="left:569px;top:670px" width="17" height="17" viewBox="0 0 17 17"><circle cx="8" cy="8" r="8" fill="#ACA899"/><path d="M5 5l6 6M11 5l-6 6" stroke="#F4F2EA" stroke-width="2"/></svg>
<svg style="left:594px;top:671px" width="14" height="14" viewBox="0 0 14 14"><rect x="0" y="0" width="14" height="14" fill="#ACA899"/><rect x="9.500" y="10" width="2" height="3.500" fill="#F4F2EA"/><rect x="11.500" y="1.500" width="1.200" height="1.200" fill="#F4F2EA"/></svg>
<svg style="left:616px;top:670px" width="19" height="16" viewBox="0 0 19 16"><rect x="5.500" y="0.500" width="12" height="10" fill="#fff" stroke="#000"/><rect x="6" y="1" width="11" height="2" fill="#000080"/><path d="M11 5.500h5M11 7.500h4" stroke="#808080"/><circle cx="5" cy="8.500" r="3.300" fill="#E8E8F0" stroke="#000" stroke-width="1.200"/><circle cx="5" cy="8.500" r="1.500" fill="none" stroke="#3090B0" stroke-width="0.900"/><path d="M7.500 11l3.500 3.500" stroke="#000" stroke-width="1.800"/></svg>
<svg style="left:641px;top:670px" width="16" height="16" viewBox="0 0 16 16"><circle cx="8" cy="8" r="4.600" fill="none" stroke="#ACA899" stroke-width="3" stroke-dasharray="2.200 1.400"/><circle cx="8" cy="8" r="4.200" fill="#B8B4A8"/><path d="M1 1l3 3M15 1l-3 3M1 15l3-3M15 15l-3-3" stroke="#D0CCC0" stroke-width="1"/><path d="M1 1h2M1 1v2M15 1h-2M15 1v2M1 15h2M1 15v-2M15 15h-2M15 15v-2" stroke="#C8C4B8" stroke-width="1"/></svg>
</body></html>
